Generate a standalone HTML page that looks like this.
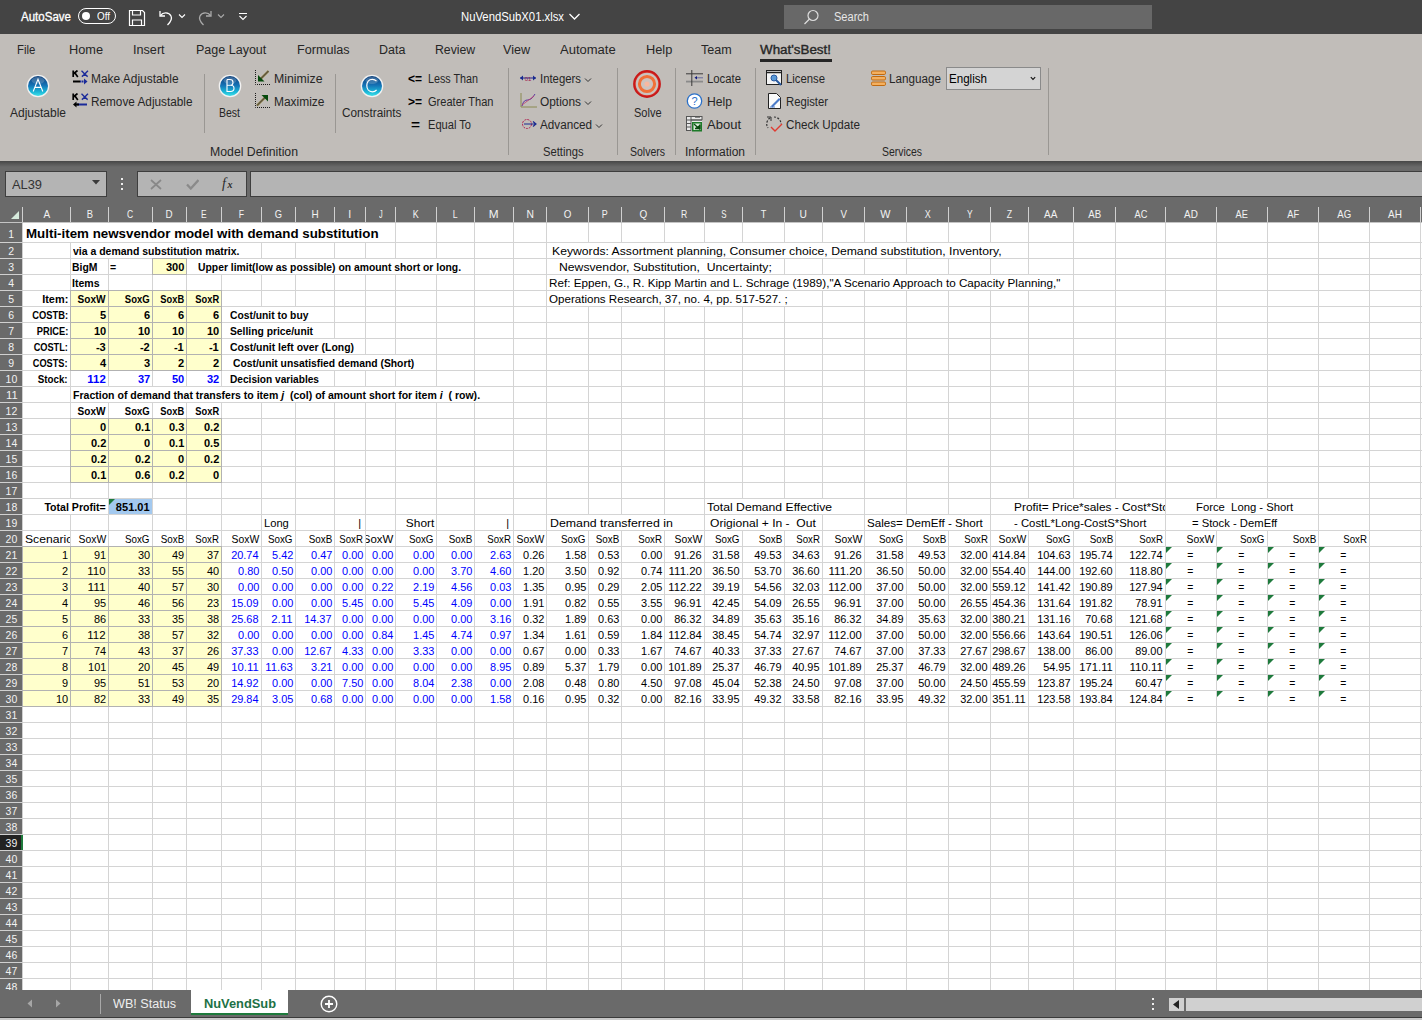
<!DOCTYPE html>
<html><head><meta charset="utf-8"><style>
html,body{margin:0;padding:0;}
body{width:1422px;height:1020px;overflow:hidden;position:relative;background:#fff;font-family:"Liberation Sans",sans-serif;}
body div, body svg{position:absolute;}
body div div, body div svg{position:absolute;}
</style></head><body>
<div style="left:0px;top:0px;width:1422px;height:34px;background:#444444;"></div>
<div style="left:21.00px;top:4.84px;width:56.03px;height:24px;line-height:24px;font-size:12px;color:#fff;text-align:left;white-space:pre;transform:scaleX(0.9609);transform-origin:left;-webkit-text-stroke:0.3px #fff;">AutoSave</div>
<div style="left:78px;top:8px;width:36px;height:14px;border:1px solid #fff;border-radius:8px;"></div>
<div style="left:82px;top:12px;width:8px;height:8px;background:#fff;border-radius:50%;"></div>
<div style="left:97.00px;top:7.04px;width:17.15px;height:20px;line-height:20px;font-size:10px;color:#fff;text-align:left;white-space:pre;transform:scaleX(0.9884);transform-origin:left;">Off</div>
<svg style="left:128px;top:9px" width="18" height="18" viewBox="0 0 18 18"><path d="M1.5 1.5h13l2 2v13h-15z" fill="none" stroke="#fff" stroke-width="1.2"/><path d="M4.5 1.5v4.5h8v-4.5M4.5 16.5v-5.5h9v5.5" fill="none" stroke="#fff" stroke-width="1.2"/></svg>
<svg style="left:157px;top:9px" width="18" height="18" viewBox="0 0 18 18"><path d="M3 2v5h5" fill="none" stroke="#fff" stroke-width="1.3"/><path d="M3.5 6.5C6 3 12 3 14 7c1.5 3-0.5 6-3.5 9" fill="none" stroke="#fff" stroke-width="1.3"/></svg>
<svg style="left:178px;top:13px" width="8" height="6" viewBox="0 0 8 6"><path d="M1 1.5l3 3 3-3" fill="none" stroke="#fff" stroke-width="1.1"/></svg>
<svg style="left:196px;top:9px" width="18" height="18" viewBox="0 0 18 18"><path d="M15 2v5h-5" fill="none" stroke="#aaa" stroke-width="1.3"/><path d="M14.5 6.5C12 3 6 3 4 7c-1.5 3 0.5 6 3.5 9" fill="none" stroke="#aaa" stroke-width="1.3"/></svg>
<svg style="left:217px;top:13px" width="8" height="6" viewBox="0 0 8 6"><path d="M1 1.5l3 3 3-3" fill="none" stroke="#aaa" stroke-width="1.1"/></svg>
<svg style="left:238px;top:11px" width="10" height="10" viewBox="0 0 10 10"><path d="M1 2.5h8M1.5 5l3.5 3.5 3.5-3.5" fill="none" stroke="#fff" stroke-width="1.1"/></svg>
<div style="left:461.00px;top:5.34px;width:113.40px;height:24px;line-height:24px;font-size:12px;color:#fff;text-align:left;white-space:pre;transform:scaleX(0.9415);transform-origin:left;">NuVendSubX01.xlsx</div>
<svg style="left:568px;top:12px" width="13" height="9" viewBox="0 0 13 9"><path d="M1.5 2l5 5 5-5" fill="none" stroke="#fff" stroke-width="1.3"/></svg>
<div style="left:784px;top:5px;width:368px;height:24px;background:#686868;"></div>
<svg style="left:803px;top:9px" width="17" height="17" viewBox="0 0 17 17"><circle cx="10" cy="6.5" r="5" fill="none" stroke="#ddd" stroke-width="1.2"/><path d="M6.5 10L1.5 15" stroke="#ddd" stroke-width="1.3"/></svg>
<div style="left:834.00px;top:5.34px;width:42.02px;height:24px;line-height:24px;font-size:12px;color:#e6e6e6;text-align:left;white-space:pre;transform:scaleX(0.9206);transform-origin:left;">Search</div>
<div style="left:0px;top:34px;width:1422px;height:127px;background:#c1bdb9;"></div>
<div style="left:17.00px;top:37.84px;width:23.34px;height:24px;line-height:24px;font-size:12px;color:#262626;text-align:left;white-space:pre;transform:scaleX(0.9465);transform-origin:left;">File</div>
<div style="left:69.00px;top:37.84px;width:36.01px;height:24px;line-height:24px;font-size:12px;color:#262626;text-align:left;white-space:pre;transform:scaleX(1.0622);transform-origin:left;">Home</div>
<div style="left:133.00px;top:37.84px;width:34.01px;height:24px;line-height:24px;font-size:12px;color:#262626;text-align:left;white-space:pre;transform:scaleX(1.0530);transform-origin:left;">Insert</div>
<div style="left:196.00px;top:37.84px;width:71.38px;height:24px;line-height:24px;font-size:12px;color:#262626;text-align:left;white-space:pre;transform:scaleX(1.0433);transform-origin:left;">Page Layout</div>
<div style="left:297.00px;top:37.84px;width:54.01px;height:24px;line-height:24px;font-size:12px;color:#262626;text-align:left;white-space:pre;transform:scaleX(1.0519);transform-origin:left;">Formulas</div>
<div style="left:379.00px;top:37.84px;width:29.35px;height:24px;line-height:24px;font-size:12px;color:#262626;text-align:left;white-space:pre;transform:scaleX(1.0376);transform-origin:left;">Data</div>
<div style="left:435.00px;top:37.84px;width:43.34px;height:24px;line-height:24px;font-size:12px;color:#262626;text-align:left;white-space:pre;transform:scaleX(1.0217);transform-origin:left;">Review</div>
<div style="left:503.00px;top:37.84px;width:29.79px;height:24px;line-height:24px;font-size:12px;color:#262626;text-align:left;white-space:pre;transform:scaleX(1.0468);transform-origin:left;">View</div>
<div style="left:560.00px;top:37.84px;width:55.36px;height:24px;line-height:24px;font-size:12px;color:#262626;text-align:left;white-space:pre;transform:scaleX(1.0845);transform-origin:left;">Automate</div>
<div style="left:646.00px;top:37.84px;width:28.68px;height:24px;line-height:24px;font-size:12px;color:#262626;text-align:left;white-space:pre;transform:scaleX(1.0657);transform-origin:left;">Help</div>
<div style="left:701.00px;top:37.84px;width:33.34px;height:24px;line-height:24px;font-size:12px;color:#262626;text-align:left;white-space:pre;transform:scaleX(1.0463);transform-origin:left;">Team</div>
<div style="left:760.00px;top:37.84px;width:67.64px;height:24px;line-height:24px;font-size:12px;color:#262626;text-align:left;white-space:pre;transform:scaleX(1.1156);transform-origin:left;-webkit-text-stroke:0.35px #262626;">What&#x27;sBest!</div>
<div style="left:760px;top:59px;width:72px;height:3px;background:#262626;"></div>
<svg style="left:26px;top:74px" width="24" height="24" viewBox="0 0 24 24"><defs><linearGradient id="gA" x1="0" y1="0" x2="0" y2="1"><stop offset="0" stop-color="#0d3f7a"/><stop offset="0.45" stop-color="#1470b4"/><stop offset="0.8" stop-color="#1cb8d8"/><stop offset="1" stop-color="#40e0e8"/></linearGradient></defs><circle cx="12" cy="12" r="11.3" fill="#f2f2f2"/><circle cx="12" cy="12" r="10" fill="url(#gA)"/><ellipse cx="12" cy="6.5" rx="6.5" ry="3.5" fill="#fff" opacity="0.18"/><path d="M7.2 17.5L12 5.2 16.8 17.5M8.8 13.4h6.4" fill="none" stroke="#fff" stroke-width="1.1"/></svg>
<div style="left:10.00px;top:100.84px;width:60.04px;height:24px;line-height:24px;font-size:12px;color:#262626;text-align:left;white-space:pre;">Adjustable</div>
<svg style="left:218px;top:74px" width="24" height="24" viewBox="0 0 24 24"><defs><linearGradient id="gB" x1="0" y1="0" x2="0" y2="1"><stop offset="0" stop-color="#0d3f7a"/><stop offset="0.45" stop-color="#1470b4"/><stop offset="0.8" stop-color="#1cb8d8"/><stop offset="1" stop-color="#40e0e8"/></linearGradient></defs><circle cx="12" cy="12" r="11.3" fill="#f2f2f2"/><circle cx="12" cy="12" r="10" fill="url(#gB)"/><ellipse cx="12" cy="6.5" rx="6.5" ry="3.5" fill="#fff" opacity="0.18"/><path d="M9 5.5v12h3.6c2.2 0 3.4-1.3 3.4-3.2 0-1.8-1.3-3-3.2-3H9M9 11.3h3.2c1.8 0 2.8-1 2.8-2.9 0-1.8-1.1-2.9-3-2.9H9" fill="none" stroke="#fff" stroke-width="1.1"/></svg>
<div style="left:219.00px;top:100.84px;width:28.01px;height:24px;line-height:24px;font-size:12px;color:#262626;text-align:left;white-space:pre;transform:scaleX(0.8746);transform-origin:left;">Best</div>
<svg style="left:360px;top:74px" width="24" height="24" viewBox="0 0 24 24"><defs><linearGradient id="gC" x1="0" y1="0" x2="0" y2="1"><stop offset="0" stop-color="#0d3f7a"/><stop offset="0.45" stop-color="#1470b4"/><stop offset="0.8" stop-color="#1cb8d8"/><stop offset="1" stop-color="#40e0e8"/></linearGradient></defs><circle cx="12" cy="12" r="11.3" fill="#f2f2f2"/><circle cx="12" cy="12" r="10" fill="url(#gC)"/><ellipse cx="12" cy="6.5" rx="6.5" ry="3.5" fill="#fff" opacity="0.18"/><path d="M16.5 7.2C15.5 6 14 5.3 12.3 5.3 8.8 5.3 6.8 8.2 6.8 11.6s2 6.2 5.5 6.2c1.8 0 3.3-.7 4.3-2" fill="none" stroke="#fff" stroke-width="1.2"/></svg>
<div style="left:342.00px;top:100.84px;width:64.69px;height:24px;line-height:24px;font-size:12px;color:#262626;text-align:left;white-space:pre;transform:scaleX(0.9804);transform-origin:left;">Constraints</div>
<svg style="left:72px;top:70px" width="17" height="16" viewBox="0 0 17 16"><path d="M1.2 0.5v6.5M1.2 4L5.5 0.5M2.8 2.8L5.8 7" fill="none" stroke="#000" stroke-width="1.7"/><path d="M9.5 0.8c1.2 1 2.5 2.5 3.2 3.2s2 2 3 2.6M16 0.8c-1.2 1-2.5 2.5-3.2 3.2s-2 2-3 2.6" fill="none" stroke="#1a2a9a" stroke-width="1.4"/><path d="M1 11.5h7" stroke="#000" stroke-width="2"/><path d="M8 11.5h6" stroke="#1a2a9a" stroke-width="2" stroke-dasharray="1.5 0.5"/><path d="M12 8.5l3.5 3-3.5 3z" fill="#1a2a9a"/></svg>
<div style="left:91.00px;top:66.84px;width:92.05px;height:24px;line-height:24px;font-size:12px;color:#262626;text-align:left;white-space:pre;transform:scaleX(0.9938);transform-origin:left;">Make Adjustable</div>
<svg style="left:72px;top:93px" width="17" height="16" viewBox="0 0 17 16"><path d="M1.2 0.5v6.5M1.2 4L5.5 0.5M2.8 2.8L5.8 7" fill="none" stroke="#000" stroke-width="1.7"/><path d="M9.5 0.8c1.2 1 2.5 2.5 3.2 3.2s2 2 3 2.6M16 0.8c-1.2 1-2.5 2.5-3.2 3.2s-2 2-3 2.6" fill="none" stroke="#1a2a9a" stroke-width="1.4"/><path d="M5 11.5h10" stroke="#1a2a9a" stroke-width="2"/><path d="M3 11.5h4" stroke="#000" stroke-width="2"/><path d="M4.5 8.5L1 11.5l3.5 3z" fill="#000"/></svg>
<div style="left:91.00px;top:89.84px;width:107.39px;height:24px;line-height:24px;font-size:12px;color:#262626;text-align:left;white-space:pre;transform:scaleX(0.9817);transform-origin:left;">Remove Adjustable</div>
<div style="left:204px;top:74px;width:1px;height:59px;background:#9a9793;"></div>
<svg style="left:254px;top:70px" width="16" height="15" viewBox="0 0 16 15"><path d="M1.5 0v14.5h14.5" fill="none" stroke="#1a1a1a" stroke-width="1" stroke-dasharray="1 1"/><path d="M14.5 1L6 9.5" stroke="#7a6a18" stroke-width="2"/><path d="M14.5 1L6 9.5" stroke="#3a3aa0" stroke-width="0.6"/><path d="M4 5v6.5h6.5z" fill="#064a0c"/></svg>
<div style="left:273.50px;top:66.84px;width:51.34px;height:24px;line-height:24px;font-size:12px;color:#262626;text-align:left;white-space:pre;transform:scaleX(1.0246);transform-origin:left;">Minimize</div>
<svg style="left:254px;top:93px" width="16" height="15" viewBox="0 0 16 15"><path d="M1.5 0v14.5h14.5" fill="none" stroke="#1a1a1a" stroke-width="1" stroke-dasharray="1 1"/><path d="M3 12.5L11.5 4" stroke="#7a6a18" stroke-width="2"/><path d="M3 12.5L11.5 4" stroke="#3a3aa0" stroke-width="0.6"/><path d="M7.5 2h6.5v6.5z" fill="#064a0c"/></svg>
<div style="left:273.50px;top:89.84px;width:54.67px;height:24px;line-height:24px;font-size:12px;color:#262626;text-align:left;white-space:pre;transform:scaleX(0.9966);transform-origin:left;">Maximize</div>
<div style="left:335px;top:74px;width:1px;height:59px;background:#9a9793;"></div>
<div style="left:408.00px;top:66.84px;width:18.02px;height:24px;line-height:24px;font-size:12px;font-weight:bold;color:#000;text-align:left;white-space:pre;">&lt;=</div>
<div style="left:427.50px;top:66.84px;width:59.81px;height:24px;line-height:24px;font-size:12px;color:#262626;text-align:left;white-space:pre;transform:scaleX(0.8959);transform-origin:left;">Less Than</div>
<div style="left:408.00px;top:89.84px;width:18.02px;height:24px;line-height:24px;font-size:12px;font-weight:bold;color:#000;text-align:left;white-space:pre;">&gt;=</div>
<div style="left:427.50px;top:89.84px;width:75.14px;height:24px;line-height:24px;font-size:12px;color:#262626;text-align:left;white-space:pre;transform:scaleX(0.9207);transform-origin:left;">Greater Than</div>
<div style="left:411.00px;top:112.84px;width:11.01px;height:24px;line-height:24px;font-size:12px;font-weight:bold;color:#000;text-align:left;white-space:pre;transform:scaleX(1.2841);transform-origin:left;">=</div>
<div style="left:427.50px;top:112.84px;width:50.48px;height:24px;line-height:24px;font-size:12px;color:#262626;text-align:left;white-space:pre;transform:scaleX(0.9251);transform-origin:left;">Equal To</div>
<div style="left:210.00px;top:139.84px;width:90.04px;height:24px;line-height:24px;font-size:12px;color:#262626;text-align:left;white-space:pre;transform:scaleX(1.0228);transform-origin:left;">Model Definition</div>
<div style="left:508px;top:68px;width:1px;height:87px;background:#9a9793;"></div>
<svg style="left:519px;top:72px" width="18" height="12" viewBox="0 0 18 12"><path d="M1 6h16" stroke="#1a2a90" stroke-width="1"/><path d="M1 6l3-2.5v5zM17 6l-3-2.5v5z" fill="#1a2a90"/><text x="9" y="8.5" text-anchor="middle" font-family="Liberation Sans" font-size="6" fill="#a02050">01</text></svg>
<div style="left:539.50px;top:66.84px;width:47.36px;height:24px;line-height:24px;font-size:12px;color:#262626;text-align:left;white-space:pre;transform:scaleX(0.9457);transform-origin:left;">Integers</div>
<svg style="left:583px;top:77px" width="10" height="6" viewBox="0 0 10 6"><path d="M2 1.5l3 3 3-3" fill="none" stroke="#333" stroke-width="1"/></svg>
<svg style="left:520px;top:93px" width="17" height="15" viewBox="0 0 17 15"><path d="M1 0v14h16" fill="none" stroke="#8a8a50" stroke-width="1"/><path d="M2 13C5 2 9 12 15 1" fill="none" stroke="#5a3aa0" stroke-width="1"/><path d="M2 12L14 3" fill="none" stroke="#c04070" stroke-width="0.8"/></svg>
<div style="left:539.50px;top:89.84px;width:45.35px;height:24px;line-height:24px;font-size:12px;color:#262626;text-align:left;white-space:pre;transform:scaleX(0.9915);transform-origin:left;">Options</div>
<svg style="left:583px;top:100px" width="10" height="6" viewBox="0 0 10 6"><path d="M2 1.5l3 3 3-3" fill="none" stroke="#333" stroke-width="1"/></svg>
<svg style="left:521px;top:117px" width="16" height="14" viewBox="0 0 16 14"><circle cx="6" cy="7" r="4.5" fill="none" stroke="#b02050" stroke-width="1" stroke-dasharray="2 1"/><path d="M3 7h12M12 4.5l3 2.5-3 2.5" fill="none" stroke="#1a2a90" stroke-width="1.2"/></svg>
<div style="left:539.50px;top:112.84px;width:57.37px;height:24px;line-height:24px;font-size:12px;color:#262626;text-align:left;white-space:pre;transform:scaleX(0.9743);transform-origin:left;">Advanced</div>
<svg style="left:594px;top:123px" width="10" height="6" viewBox="0 0 10 6"><path d="M2 1.5l3 3 3-3" fill="none" stroke="#333" stroke-width="1"/></svg>
<div style="left:542.50px;top:139.84px;width:47.36px;height:24px;line-height:24px;font-size:12px;color:#262626;text-align:left;white-space:pre;transform:scaleX(0.9341);transform-origin:left;">Settings</div>
<div style="left:617px;top:68px;width:1px;height:87px;background:#9a9793;"></div>
<svg style="left:633px;top:70px" width="30" height="30" viewBox="0 0 30 30"><defs><radialGradient id="sr" cx="50%" cy="50%" r="50%"><stop offset="0.8" stop-color="#f04a3a"/><stop offset="1" stop-color="#c81818"/></radialGradient></defs><circle cx="14" cy="14" r="12.6" fill="none" stroke="url(#sr)" stroke-width="2.6"/><circle cx="14" cy="14" r="10.8" fill="#cdc3bf"/><circle cx="14" cy="14" r="7.6" fill="none" stroke="#f07038" stroke-width="3"/><circle cx="14" cy="14" r="2.6" fill="#f8b8a0"/></svg>
<div style="left:633.50px;top:100.84px;width:34.02px;height:24px;line-height:24px;font-size:12px;color:#262626;text-align:left;white-space:pre;transform:scaleX(0.9162);transform-origin:left;">Solve</div>
<div style="left:629.50px;top:139.84px;width:44.01px;height:24px;line-height:24px;font-size:12px;color:#262626;text-align:left;white-space:pre;transform:scaleX(0.8747);transform-origin:left;">Solvers</div>
<div style="left:675px;top:68px;width:1px;height:87px;background:#9a9793;"></div>
<svg style="left:686px;top:70px" width="17" height="16" viewBox="0 0 17 16"><path d="M0 3.8h17" stroke="#3a3a3a" stroke-width="1"/><path d="M0 11.6h17" stroke="#8a8a8a" stroke-width="1.8"/><path d="M5.8 0v16" stroke="#3a3a3a" stroke-width="1"/><path d="M8.5 7.8l2.5-1.8v3.6z" fill="#101a80"/><path d="M11.5 7.8h5" stroke="#101a80" stroke-width="1" stroke-dasharray="1 1"/></svg>
<div style="left:706.50px;top:66.84px;width:40.03px;height:24px;line-height:24px;font-size:12px;color:#262626;text-align:left;white-space:pre;transform:scaleX(0.9438);transform-origin:left;">Locate</div>
<svg style="left:686px;top:93px" width="17" height="16" viewBox="0 0 17 16"><circle cx="8.5" cy="8" r="7.2" fill="#fff" stroke="#2a70c8" stroke-width="1.3"/><text x="8.5" y="12.3" text-anchor="middle" font-family="Liberation Sans" font-size="11" fill="#2a70c8">?</text></svg>
<div style="left:706.50px;top:89.84px;width:28.68px;height:24px;line-height:24px;font-size:12px;color:#262626;text-align:left;white-space:pre;transform:scaleX(1.0130);transform-origin:left;">Help</div>
<svg style="left:686px;top:116px" width="17" height="16" viewBox="0 0 17 16"><rect x="0" y="0" width="16" height="15" fill="#e8e8e8"/><path d="M0.5 0v15M5 0v15M16 0v4M0 0.5h16M0 4h16M0 7.5h5M0 11h5M0 14.5h5M5 4h11" stroke="#555" stroke-width="1"/><path d="M9 1.5h5" stroke="#888"/><rect x="6" y="6" width="10" height="9.5" fill="#1c7a28"/><rect x="7.5" y="7.5" width="7" height="6.5" fill="#d8e8d8"/><path d="M8 8l6 5.5M9 12.5h5v-4" fill="#0a4a10" stroke="#0a4a10" stroke-width="1.3"/></svg>
<div style="left:706.50px;top:112.84px;width:35.36px;height:24px;line-height:24px;font-size:12px;color:#262626;text-align:left;white-space:pre;transform:scaleX(1.0843);transform-origin:left;">About</div>
<div style="left:685.00px;top:139.84px;width:64.02px;height:24px;line-height:24px;font-size:12px;color:#262626;text-align:left;white-space:pre;">Information</div>
<div style="left:755px;top:68px;width:1px;height:87px;background:#9a9793;"></div>
<svg style="left:766px;top:70px" width="17" height="16" viewBox="0 0 17 16"><rect x="0.5" y="0.5" width="15" height="14" fill="#f4f4f4" stroke="#222" stroke-width="1"/><path d="M0.5 2.5h15" stroke="#222" stroke-width="1.5"/><circle cx="8" cy="8" r="3" fill="#5a9ad8" stroke="#2a5aa0"/><path d="M10 10l5 5" stroke="#2a5aa0" stroke-width="2"/></svg>
<div style="left:786.00px;top:66.84px;width:45.36px;height:24px;line-height:24px;font-size:12px;color:#262626;text-align:left;white-space:pre;transform:scaleX(0.9430);transform-origin:left;">License</div>
<svg style="left:767px;top:93px" width="16" height="16" viewBox="0 0 16 16"><path d="M1.5 0.5h8l4 4v11h-12z" fill="#fafafa" stroke="#222"/><path d="M4 13l8-8 1.5 1.5-8 8z" fill="#4a7ac8"/><path d="M3 14h5" stroke="#4a7ac8"/></svg>
<div style="left:786.00px;top:89.84px;width:48.68px;height:24px;line-height:24px;font-size:12px;color:#262626;text-align:left;white-space:pre;transform:scaleX(0.9400);transform-origin:left;">Register</div>
<svg style="left:766px;top:116px" width="17" height="16" viewBox="0 0 17 16"><path d="M4 2A7 7 0 0 0 2 12M8 1a7 7 0 0 1 7 7" fill="none" stroke="#333" stroke-width="1.2" stroke-dasharray="2 1.5"/><path d="M1 1h4v4" fill="none" stroke="#333" stroke-width="1"/><path d="M5 11l4 4 7-7" fill="none" stroke="#e03a30" stroke-width="1.4"/></svg>
<div style="left:786.00px;top:112.84px;width:80.04px;height:24px;line-height:24px;font-size:12px;color:#262626;text-align:left;white-space:pre;transform:scaleX(0.9732);transform-origin:left;">Check Update</div>
<svg style="left:870px;top:70px" width="17" height="17" viewBox="0 0 17 17"><g fill="#f4b060" stroke="#c06a10" stroke-width="1"><rect x="1.5" y="1" width="14" height="3.5" rx="1.2"/><rect x="1.5" y="6.5" width="14" height="3.5" rx="1.2"/><rect x="1.5" y="12" width="14" height="3.5" rx="1.2"/></g></svg>
<div style="left:889.00px;top:66.84px;width:57.38px;height:24px;line-height:24px;font-size:12px;color:#262626;text-align:left;white-space:pre;transform:scaleX(0.9741);transform-origin:left;">Language</div>
<div style="left:946px;top:67px;width:93px;height:21px;background:#d4d4d4;border:1px solid #8a8a8a;"></div>
<div style="left:949.00px;top:66.84px;width:43.36px;height:24px;line-height:24px;font-size:12px;color:#000;text-align:left;white-space:pre;transform:scaleX(0.9655);transform-origin:left;">English</div>
<svg style="left:1030px;top:76px" width="6" height="5" viewBox="0 0 6 5"><path d="M0.8 1.2l2.2 2.2 2.2-2.2" fill="none" stroke="#111" stroke-width="1.1"/></svg>
<div style="left:882.00px;top:139.84px;width:50.01px;height:24px;line-height:24px;font-size:12px;color:#262626;text-align:left;white-space:pre;transform:scaleX(0.8693);transform-origin:left;">Services</div>
<div style="left:1048px;top:68px;width:1px;height:87px;background:#9a9793;"></div>
<div style="left:0px;top:161px;width:1422px;height:62px;background:#6a6a6a;"></div>
<div style="left:0px;top:161px;width:1422px;height:6px;background:linear-gradient(#474747,#6a6a6a);"></div>
<div style="left:5px;top:171px;width:100px;height:24px;background:#b4b4b4;border:1px solid #3e3e3e;"></div>
<div style="left:12.00px;top:172.84px;width:32.02px;height:24px;line-height:24px;font-size:12px;color:#333;text-align:left;white-space:pre;transform:scaleX(1.0705);transform-origin:left;">AL39</div>
<svg style="left:92px;top:180px" width="8" height="5" viewBox="0 0 8 5"><path d="M0 0h8l-4 4.5z" fill="#3a3a3a"/></svg>
<div style="left:121px;top:178px;width:2px;height:2px;background:#eee;"></div>
<div style="left:121px;top:183px;width:2px;height:2px;background:#eee;"></div>
<div style="left:121px;top:188px;width:2px;height:2px;background:#eee;"></div>
<div style="left:137px;top:171px;width:108px;height:24px;background:#b4b4b4;border:1px solid #3e3e3e;"></div>
<svg style="left:150px;top:179px" width="12" height="11" viewBox="0 0 12 11"><path d="M1 1l10 9M11 1L1 10" stroke="#888" stroke-width="1.7"/></svg>
<svg style="left:186px;top:179px" width="13" height="11" viewBox="0 0 13 11"><path d="M1 5.5l3.8 4L12.5 1" fill="none" stroke="#8a8a8a" stroke-width="2.3"/></svg>
<svg style="left:220px;top:176px" width="16" height="16" viewBox="0 0 16 16"><text x="2" y="12" font-family="Liberation Serif" font-style="italic" font-size="14" fill="#2a2a2a">f</text><text x="7.5" y="12" font-family="Liberation Serif" font-style="italic" font-weight="bold" font-size="10" fill="#2a2a2a">x</text></svg>
<div style="left:250px;top:171px;width:1180px;height:24px;background:#b4b4b4;border:1px solid #3e3e3e;"></div>
<svg style="left:11px;top:211px" width="8" height="8" viewBox="0 0 8 8"><path d="M8 0v8H0z" fill="#d6eadc"/></svg>
<div style="left:40.66px;top:203.02px;width:11.67px;height:23.0px;line-height:23.0px;font-size:11.5px;color:#f2f2f2;text-align:center;white-space:pre;transform:scaleX(0.8674);transform-origin:center;">A</div>
<div style="left:83.66px;top:203.02px;width:11.67px;height:23.0px;line-height:23.0px;font-size:11.5px;color:#f2f2f2;text-align:center;white-space:pre;transform:scaleX(0.8155);transform-origin:center;">B</div>
<div style="left:124.35px;top:203.02px;width:12.31px;height:23.0px;line-height:23.0px;font-size:11.5px;color:#f2f2f2;text-align:center;white-space:pre;transform:scaleX(0.7383);transform-origin:center;">C</div>
<div style="left:163.35px;top:203.02px;width:12.31px;height:23.0px;line-height:23.0px;font-size:11.5px;color:#f2f2f2;text-align:center;white-space:pre;transform:scaleX(0.8519);transform-origin:center;">D</div>
<div style="left:198.16px;top:203.02px;width:11.67px;height:23.0px;line-height:23.0px;font-size:11.5px;color:#f2f2f2;text-align:center;white-space:pre;transform:scaleX(0.7320);transform-origin:center;">E</div>
<div style="left:235.99px;top:203.02px;width:11.02px;height:23.0px;line-height:23.0px;font-size:11.5px;color:#f2f2f2;text-align:center;white-space:pre;transform:scaleX(0.7523);transform-origin:center;">F</div>
<div style="left:272.03px;top:203.02px;width:12.94px;height:23.0px;line-height:23.0px;font-size:11.5px;color:#f2f2f2;text-align:center;white-space:pre;transform:scaleX(0.8111);transform-origin:center;">G</div>
<div style="left:308.85px;top:203.02px;width:12.31px;height:23.0px;line-height:23.0px;font-size:11.5px;color:#f2f2f2;text-align:center;white-space:pre;transform:scaleX(0.8627);transform-origin:center;">H</div>
<div style="left:346.40px;top:203.02px;width:7.19px;height:23.0px;line-height:23.0px;font-size:11.5px;color:#f2f2f2;text-align:center;white-space:pre;transform:scaleX(0.9069);transform-origin:center;">I</div>
<div style="left:375.62px;top:203.02px;width:9.75px;height:23.0px;line-height:23.0px;font-size:11.5px;color:#f2f2f2;text-align:center;white-space:pre;transform:scaleX(0.6377);transform-origin:center;">J</div>
<div style="left:410.16px;top:203.02px;width:11.67px;height:23.0px;line-height:23.0px;font-size:11.5px;color:#f2f2f2;text-align:center;white-space:pre;transform:scaleX(0.7789);transform-origin:center;">K</div>
<div style="left:450.30px;top:203.02px;width:10.40px;height:23.0px;line-height:23.0px;font-size:11.5px;color:#f2f2f2;text-align:center;white-space:pre;transform:scaleX(0.7560);transform-origin:center;">L</div>
<div style="left:487.21px;top:203.02px;width:13.58px;height:23.0px;line-height:23.0px;font-size:11.5px;color:#f2f2f2;text-align:center;white-space:pre;transform:scaleX(1.0264);transform-origin:center;">M</div>
<div style="left:523.85px;top:203.02px;width:12.31px;height:23.0px;line-height:23.0px;font-size:11.5px;color:#f2f2f2;text-align:center;white-space:pre;transform:scaleX(0.8938);transform-origin:center;">N</div>
<div style="left:561.03px;top:203.02px;width:12.94px;height:23.0px;line-height:23.0px;font-size:11.5px;color:#f2f2f2;text-align:center;white-space:pre;transform:scaleX(0.8512);transform-origin:center;">O</div>
<div style="left:599.16px;top:203.02px;width:11.67px;height:23.0px;line-height:23.0px;font-size:11.5px;color:#f2f2f2;text-align:center;white-space:pre;transform:scaleX(0.7745);transform-origin:center;">P</div>
<div style="left:636.53px;top:203.02px;width:12.94px;height:23.0px;line-height:23.0px;font-size:11.5px;color:#f2f2f2;text-align:center;white-space:pre;transform:scaleX(0.8651);transform-origin:center;">Q</div>
<div style="left:678.35px;top:203.02px;width:12.31px;height:23.0px;line-height:23.0px;font-size:11.5px;color:#f2f2f2;text-align:center;white-space:pre;transform:scaleX(0.7518);transform-origin:center;">R</div>
<div style="left:717.66px;top:203.02px;width:11.67px;height:23.0px;line-height:23.0px;font-size:11.5px;color:#f2f2f2;text-align:center;white-space:pre;transform:scaleX(0.6888);transform-origin:center;">S</div>
<div style="left:757.99px;top:203.02px;width:11.02px;height:23.0px;line-height:23.0px;font-size:11.5px;color:#f2f2f2;text-align:center;white-space:pre;transform:scaleX(0.7978);transform-origin:center;">T</div>
<div style="left:797.35px;top:203.02px;width:12.31px;height:23.0px;line-height:23.0px;font-size:11.5px;color:#f2f2f2;text-align:center;white-space:pre;transform:scaleX(0.8884);transform-origin:center;">U</div>
<div style="left:837.66px;top:203.02px;width:11.67px;height:23.0px;line-height:23.0px;font-size:11.5px;color:#f2f2f2;text-align:center;white-space:pre;transform:scaleX(0.8506);transform-origin:center;">V</div>
<div style="left:878.07px;top:203.02px;width:14.85px;height:23.0px;line-height:23.0px;font-size:11.5px;color:#f2f2f2;text-align:center;white-space:pre;transform:scaleX(0.9425);transform-origin:center;">W</div>
<div style="left:921.66px;top:203.02px;width:11.67px;height:23.0px;line-height:23.0px;font-size:11.5px;color:#f2f2f2;text-align:center;white-space:pre;transform:scaleX(0.7781);transform-origin:center;">X</div>
<div style="left:963.66px;top:203.02px;width:11.67px;height:23.0px;line-height:23.0px;font-size:11.5px;color:#f2f2f2;text-align:center;white-space:pre;transform:scaleX(0.7306);transform-origin:center;">Y</div>
<div style="left:1003.99px;top:203.02px;width:11.02px;height:23.0px;line-height:23.0px;font-size:11.5px;color:#f2f2f2;text-align:center;white-space:pre;transform:scaleX(0.7667);transform-origin:center;">Z</div>
<div style="left:1041.33px;top:203.02px;width:19.34px;height:23.0px;line-height:23.0px;font-size:11.5px;color:#f2f2f2;text-align:center;white-space:pre;transform:scaleX(0.8674);transform-origin:center;">AA</div>
<div style="left:1084.83px;top:203.02px;width:19.34px;height:23.0px;line-height:23.0px;font-size:11.5px;color:#f2f2f2;text-align:center;white-space:pre;transform:scaleX(0.8415);transform-origin:center;">AB</div>
<div style="left:1130.51px;top:203.02px;width:19.98px;height:23.0px;line-height:23.0px;font-size:11.5px;color:#f2f2f2;text-align:center;white-space:pre;transform:scaleX(0.8003);transform-origin:center;">AC</div>
<div style="left:1181.01px;top:203.02px;width:19.98px;height:23.0px;line-height:23.0px;font-size:11.5px;color:#f2f2f2;text-align:center;white-space:pre;transform:scaleX(0.8594);transform-origin:center;">AD</div>
<div style="left:1232.33px;top:203.02px;width:19.34px;height:23.0px;line-height:23.0px;font-size:11.5px;color:#f2f2f2;text-align:center;white-space:pre;transform:scaleX(0.7997);transform-origin:center;">AE</div>
<div style="left:1283.65px;top:203.02px;width:18.69px;height:23.0px;line-height:23.0px;font-size:11.5px;color:#f2f2f2;text-align:center;white-space:pre;transform:scaleX(0.8124);transform-origin:center;">AF</div>
<div style="left:1333.69px;top:203.02px;width:20.62px;height:23.0px;line-height:23.0px;font-size:11.5px;color:#f2f2f2;text-align:center;white-space:pre;transform:scaleX(0.8371);transform-origin:center;">AG</div>
<div style="left:1385.01px;top:203.02px;width:19.98px;height:23.0px;line-height:23.0px;font-size:11.5px;color:#f2f2f2;text-align:center;white-space:pre;transform:scaleX(0.8650);transform-origin:center;">AH</div>
<div style="left:22px;top:207px;width:1px;height:15px;background:#d0d0d0;"></div>
<div style="left:70px;top:207px;width:1px;height:15px;background:#d0d0d0;"></div>
<div style="left:108px;top:207px;width:1px;height:15px;background:#d0d0d0;"></div>
<div style="left:152px;top:207px;width:1px;height:15px;background:#d0d0d0;"></div>
<div style="left:186px;top:207px;width:1px;height:15px;background:#d0d0d0;"></div>
<div style="left:221px;top:207px;width:1px;height:15px;background:#d0d0d0;"></div>
<div style="left:261px;top:207px;width:1px;height:15px;background:#d0d0d0;"></div>
<div style="left:295px;top:207px;width:1px;height:15px;background:#d0d0d0;"></div>
<div style="left:334px;top:207px;width:1px;height:15px;background:#d0d0d0;"></div>
<div style="left:365px;top:207px;width:1px;height:15px;background:#d0d0d0;"></div>
<div style="left:395px;top:207px;width:1px;height:15px;background:#d0d0d0;"></div>
<div style="left:436px;top:207px;width:1px;height:15px;background:#d0d0d0;"></div>
<div style="left:474px;top:207px;width:1px;height:15px;background:#d0d0d0;"></div>
<div style="left:513px;top:207px;width:1px;height:15px;background:#d0d0d0;"></div>
<div style="left:546px;top:207px;width:1px;height:15px;background:#d0d0d0;"></div>
<div style="left:588px;top:207px;width:1px;height:15px;background:#d0d0d0;"></div>
<div style="left:621px;top:207px;width:1px;height:15px;background:#d0d0d0;"></div>
<div style="left:664px;top:207px;width:1px;height:15px;background:#d0d0d0;"></div>
<div style="left:704px;top:207px;width:1px;height:15px;background:#d0d0d0;"></div>
<div style="left:742px;top:207px;width:1px;height:15px;background:#d0d0d0;"></div>
<div style="left:784px;top:207px;width:1px;height:15px;background:#d0d0d0;"></div>
<div style="left:822px;top:207px;width:1px;height:15px;background:#d0d0d0;"></div>
<div style="left:864px;top:207px;width:1px;height:15px;background:#d0d0d0;"></div>
<div style="left:906px;top:207px;width:1px;height:15px;background:#d0d0d0;"></div>
<div style="left:948px;top:207px;width:1px;height:15px;background:#d0d0d0;"></div>
<div style="left:990px;top:207px;width:1px;height:15px;background:#d0d0d0;"></div>
<div style="left:1028px;top:207px;width:1px;height:15px;background:#d0d0d0;"></div>
<div style="left:1073px;top:207px;width:1px;height:15px;background:#d0d0d0;"></div>
<div style="left:1115px;top:207px;width:1px;height:15px;background:#d0d0d0;"></div>
<div style="left:1165px;top:207px;width:1px;height:15px;background:#d0d0d0;"></div>
<div style="left:1216px;top:207px;width:1px;height:15px;background:#d0d0d0;"></div>
<div style="left:1267px;top:207px;width:1px;height:15px;background:#d0d0d0;"></div>
<div style="left:1318px;top:207px;width:1px;height:15px;background:#d0d0d0;"></div>
<div style="left:1369px;top:207px;width:1px;height:15px;background:#d0d0d0;"></div>
<div style="left:1420px;top:207px;width:1px;height:15px;background:#d0d0d0;"></div>
<div style="left:23px;top:223px;width:1399px;height:767px;background:#fff;"></div>
<div style="left:0px;top:223px;width:22px;height:767px;background:#6a6a6a;"></div>
<div style="left:22px;top:223px;width:1px;height:767px;background:#d0d0d0;"></div>
<div style="left:0px;top:222px;width:1422px;height:1px;background:#c4c4c4;"></div>
<div style="left:23px;top:242px;width:1399px;height:1px;background:#d4d4d4;"></div>
<div style="left:0px;top:242px;width:22px;height:1px;background:#d0d0d0;"></div>
<div style="left:23px;top:258px;width:1399px;height:1px;background:#d4d4d4;"></div>
<div style="left:0px;top:258px;width:22px;height:1px;background:#d0d0d0;"></div>
<div style="left:23px;top:274px;width:1399px;height:1px;background:#d4d4d4;"></div>
<div style="left:0px;top:274px;width:22px;height:1px;background:#d0d0d0;"></div>
<div style="left:23px;top:290px;width:1399px;height:1px;background:#d4d4d4;"></div>
<div style="left:0px;top:290px;width:22px;height:1px;background:#d0d0d0;"></div>
<div style="left:23px;top:306px;width:1399px;height:1px;background:#d4d4d4;"></div>
<div style="left:0px;top:306px;width:22px;height:1px;background:#d0d0d0;"></div>
<div style="left:23px;top:322px;width:1399px;height:1px;background:#d4d4d4;"></div>
<div style="left:0px;top:322px;width:22px;height:1px;background:#d0d0d0;"></div>
<div style="left:23px;top:338px;width:1399px;height:1px;background:#d4d4d4;"></div>
<div style="left:0px;top:338px;width:22px;height:1px;background:#d0d0d0;"></div>
<div style="left:23px;top:354px;width:1399px;height:1px;background:#d4d4d4;"></div>
<div style="left:0px;top:354px;width:22px;height:1px;background:#d0d0d0;"></div>
<div style="left:23px;top:370px;width:1399px;height:1px;background:#d4d4d4;"></div>
<div style="left:0px;top:370px;width:22px;height:1px;background:#d0d0d0;"></div>
<div style="left:23px;top:386px;width:1399px;height:1px;background:#d4d4d4;"></div>
<div style="left:0px;top:386px;width:22px;height:1px;background:#d0d0d0;"></div>
<div style="left:23px;top:402px;width:1399px;height:1px;background:#d4d4d4;"></div>
<div style="left:0px;top:402px;width:22px;height:1px;background:#d0d0d0;"></div>
<div style="left:23px;top:418px;width:1399px;height:1px;background:#d4d4d4;"></div>
<div style="left:0px;top:418px;width:22px;height:1px;background:#d0d0d0;"></div>
<div style="left:23px;top:434px;width:1399px;height:1px;background:#d4d4d4;"></div>
<div style="left:0px;top:434px;width:22px;height:1px;background:#d0d0d0;"></div>
<div style="left:23px;top:450px;width:1399px;height:1px;background:#d4d4d4;"></div>
<div style="left:0px;top:450px;width:22px;height:1px;background:#d0d0d0;"></div>
<div style="left:23px;top:466px;width:1399px;height:1px;background:#d4d4d4;"></div>
<div style="left:0px;top:466px;width:22px;height:1px;background:#d0d0d0;"></div>
<div style="left:23px;top:482px;width:1399px;height:1px;background:#d4d4d4;"></div>
<div style="left:0px;top:482px;width:22px;height:1px;background:#d0d0d0;"></div>
<div style="left:23px;top:498px;width:1399px;height:1px;background:#d4d4d4;"></div>
<div style="left:0px;top:498px;width:22px;height:1px;background:#d0d0d0;"></div>
<div style="left:23px;top:514px;width:1399px;height:1px;background:#d4d4d4;"></div>
<div style="left:0px;top:514px;width:22px;height:1px;background:#d0d0d0;"></div>
<div style="left:23px;top:530px;width:1399px;height:1px;background:#d4d4d4;"></div>
<div style="left:0px;top:530px;width:22px;height:1px;background:#d0d0d0;"></div>
<div style="left:23px;top:546px;width:1399px;height:1px;background:#d4d4d4;"></div>
<div style="left:0px;top:546px;width:22px;height:1px;background:#d0d0d0;"></div>
<div style="left:23px;top:562px;width:1399px;height:1px;background:#d4d4d4;"></div>
<div style="left:0px;top:562px;width:22px;height:1px;background:#d0d0d0;"></div>
<div style="left:23px;top:578px;width:1399px;height:1px;background:#d4d4d4;"></div>
<div style="left:0px;top:578px;width:22px;height:1px;background:#d0d0d0;"></div>
<div style="left:23px;top:594px;width:1399px;height:1px;background:#d4d4d4;"></div>
<div style="left:0px;top:594px;width:22px;height:1px;background:#d0d0d0;"></div>
<div style="left:23px;top:610px;width:1399px;height:1px;background:#d4d4d4;"></div>
<div style="left:0px;top:610px;width:22px;height:1px;background:#d0d0d0;"></div>
<div style="left:23px;top:626px;width:1399px;height:1px;background:#d4d4d4;"></div>
<div style="left:0px;top:626px;width:22px;height:1px;background:#d0d0d0;"></div>
<div style="left:23px;top:642px;width:1399px;height:1px;background:#d4d4d4;"></div>
<div style="left:0px;top:642px;width:22px;height:1px;background:#d0d0d0;"></div>
<div style="left:23px;top:658px;width:1399px;height:1px;background:#d4d4d4;"></div>
<div style="left:0px;top:658px;width:22px;height:1px;background:#d0d0d0;"></div>
<div style="left:23px;top:674px;width:1399px;height:1px;background:#d4d4d4;"></div>
<div style="left:0px;top:674px;width:22px;height:1px;background:#d0d0d0;"></div>
<div style="left:23px;top:690px;width:1399px;height:1px;background:#d4d4d4;"></div>
<div style="left:0px;top:690px;width:22px;height:1px;background:#d0d0d0;"></div>
<div style="left:23px;top:706px;width:1399px;height:1px;background:#d4d4d4;"></div>
<div style="left:0px;top:706px;width:22px;height:1px;background:#d0d0d0;"></div>
<div style="left:23px;top:722px;width:1399px;height:1px;background:#d4d4d4;"></div>
<div style="left:0px;top:722px;width:22px;height:1px;background:#d0d0d0;"></div>
<div style="left:23px;top:738px;width:1399px;height:1px;background:#d4d4d4;"></div>
<div style="left:0px;top:738px;width:22px;height:1px;background:#d0d0d0;"></div>
<div style="left:23px;top:754px;width:1399px;height:1px;background:#d4d4d4;"></div>
<div style="left:0px;top:754px;width:22px;height:1px;background:#d0d0d0;"></div>
<div style="left:23px;top:770px;width:1399px;height:1px;background:#d4d4d4;"></div>
<div style="left:0px;top:770px;width:22px;height:1px;background:#d0d0d0;"></div>
<div style="left:23px;top:786px;width:1399px;height:1px;background:#d4d4d4;"></div>
<div style="left:0px;top:786px;width:22px;height:1px;background:#d0d0d0;"></div>
<div style="left:23px;top:802px;width:1399px;height:1px;background:#d4d4d4;"></div>
<div style="left:0px;top:802px;width:22px;height:1px;background:#d0d0d0;"></div>
<div style="left:23px;top:818px;width:1399px;height:1px;background:#d4d4d4;"></div>
<div style="left:0px;top:818px;width:22px;height:1px;background:#d0d0d0;"></div>
<div style="left:23px;top:834px;width:1399px;height:1px;background:#d4d4d4;"></div>
<div style="left:0px;top:834px;width:22px;height:1px;background:#d0d0d0;"></div>
<div style="left:23px;top:850px;width:1399px;height:1px;background:#d4d4d4;"></div>
<div style="left:0px;top:850px;width:22px;height:1px;background:#d0d0d0;"></div>
<div style="left:23px;top:866px;width:1399px;height:1px;background:#d4d4d4;"></div>
<div style="left:0px;top:866px;width:22px;height:1px;background:#d0d0d0;"></div>
<div style="left:23px;top:882px;width:1399px;height:1px;background:#d4d4d4;"></div>
<div style="left:0px;top:882px;width:22px;height:1px;background:#d0d0d0;"></div>
<div style="left:23px;top:898px;width:1399px;height:1px;background:#d4d4d4;"></div>
<div style="left:0px;top:898px;width:22px;height:1px;background:#d0d0d0;"></div>
<div style="left:23px;top:914px;width:1399px;height:1px;background:#d4d4d4;"></div>
<div style="left:0px;top:914px;width:22px;height:1px;background:#d0d0d0;"></div>
<div style="left:23px;top:930px;width:1399px;height:1px;background:#d4d4d4;"></div>
<div style="left:0px;top:930px;width:22px;height:1px;background:#d0d0d0;"></div>
<div style="left:23px;top:946px;width:1399px;height:1px;background:#d4d4d4;"></div>
<div style="left:0px;top:946px;width:22px;height:1px;background:#d0d0d0;"></div>
<div style="left:23px;top:962px;width:1399px;height:1px;background:#d4d4d4;"></div>
<div style="left:0px;top:962px;width:22px;height:1px;background:#d0d0d0;"></div>
<div style="left:23px;top:978px;width:1399px;height:1px;background:#d4d4d4;"></div>
<div style="left:0px;top:978px;width:22px;height:1px;background:#d0d0d0;"></div>
<div style="left:0px;top:835px;width:21px;height:15px;background:#222;"></div>
<div style="left:21px;top:835px;width:2px;height:15px;background:#1e7a3c;"></div>
<div style="left:6.30px;top:222.52px;width:10.40px;height:23.0px;line-height:23.0px;font-size:11.5px;color:#f2f2f2;text-align:center;white-space:pre;transform:scaleX(0.9114);transform-origin:center;">1</div>
<div style="left:6.30px;top:239.52px;width:10.40px;height:23.0px;line-height:23.0px;font-size:11.5px;color:#f2f2f2;text-align:center;white-space:pre;transform:scaleX(0.9114);transform-origin:center;">2</div>
<div style="left:6.30px;top:255.52px;width:10.40px;height:23.0px;line-height:23.0px;font-size:11.5px;color:#f2f2f2;text-align:center;white-space:pre;transform:scaleX(0.9114);transform-origin:center;">3</div>
<div style="left:6.30px;top:271.52px;width:10.40px;height:23.0px;line-height:23.0px;font-size:11.5px;color:#f2f2f2;text-align:center;white-space:pre;transform:scaleX(0.9114);transform-origin:center;">4</div>
<div style="left:6.30px;top:287.52px;width:10.40px;height:23.0px;line-height:23.0px;font-size:11.5px;color:#f2f2f2;text-align:center;white-space:pre;transform:scaleX(0.9114);transform-origin:center;">5</div>
<div style="left:6.30px;top:303.52px;width:10.40px;height:23.0px;line-height:23.0px;font-size:11.5px;color:#f2f2f2;text-align:center;white-space:pre;transform:scaleX(0.9114);transform-origin:center;">6</div>
<div style="left:6.30px;top:319.52px;width:10.40px;height:23.0px;line-height:23.0px;font-size:11.5px;color:#f2f2f2;text-align:center;white-space:pre;transform:scaleX(0.9114);transform-origin:center;">7</div>
<div style="left:6.30px;top:335.52px;width:10.40px;height:23.0px;line-height:23.0px;font-size:11.5px;color:#f2f2f2;text-align:center;white-space:pre;transform:scaleX(0.9114);transform-origin:center;">8</div>
<div style="left:6.30px;top:351.52px;width:10.40px;height:23.0px;line-height:23.0px;font-size:11.5px;color:#f2f2f2;text-align:center;white-space:pre;transform:scaleX(0.9114);transform-origin:center;">9</div>
<div style="left:3.10px;top:367.52px;width:16.79px;height:23.0px;line-height:23.0px;font-size:11.5px;color:#f2f2f2;text-align:center;white-space:pre;transform:scaleX(0.9114);transform-origin:center;">10</div>
<div style="left:3.53px;top:383.52px;width:15.94px;height:23.0px;line-height:23.0px;font-size:11.5px;color:#f2f2f2;text-align:center;white-space:pre;transform:scaleX(0.9766);transform-origin:center;">11</div>
<div style="left:3.10px;top:399.52px;width:16.79px;height:23.0px;line-height:23.0px;font-size:11.5px;color:#f2f2f2;text-align:center;white-space:pre;transform:scaleX(0.9114);transform-origin:center;">12</div>
<div style="left:3.10px;top:415.52px;width:16.79px;height:23.0px;line-height:23.0px;font-size:11.5px;color:#f2f2f2;text-align:center;white-space:pre;transform:scaleX(0.9114);transform-origin:center;">13</div>
<div style="left:3.10px;top:431.52px;width:16.79px;height:23.0px;line-height:23.0px;font-size:11.5px;color:#f2f2f2;text-align:center;white-space:pre;transform:scaleX(0.9114);transform-origin:center;">14</div>
<div style="left:3.10px;top:447.52px;width:16.79px;height:23.0px;line-height:23.0px;font-size:11.5px;color:#f2f2f2;text-align:center;white-space:pre;transform:scaleX(0.9114);transform-origin:center;">15</div>
<div style="left:3.10px;top:463.52px;width:16.79px;height:23.0px;line-height:23.0px;font-size:11.5px;color:#f2f2f2;text-align:center;white-space:pre;transform:scaleX(0.9114);transform-origin:center;">16</div>
<div style="left:3.10px;top:479.52px;width:16.79px;height:23.0px;line-height:23.0px;font-size:11.5px;color:#f2f2f2;text-align:center;white-space:pre;transform:scaleX(0.9114);transform-origin:center;">17</div>
<div style="left:3.10px;top:495.52px;width:16.79px;height:23.0px;line-height:23.0px;font-size:11.5px;color:#f2f2f2;text-align:center;white-space:pre;transform:scaleX(0.9114);transform-origin:center;">18</div>
<div style="left:3.10px;top:511.52px;width:16.79px;height:23.0px;line-height:23.0px;font-size:11.5px;color:#f2f2f2;text-align:center;white-space:pre;transform:scaleX(0.9114);transform-origin:center;">19</div>
<div style="left:3.10px;top:527.52px;width:16.79px;height:23.0px;line-height:23.0px;font-size:11.5px;color:#f2f2f2;text-align:center;white-space:pre;transform:scaleX(0.9114);transform-origin:center;">20</div>
<div style="left:3.10px;top:543.52px;width:16.79px;height:23.0px;line-height:23.0px;font-size:11.5px;color:#f2f2f2;text-align:center;white-space:pre;transform:scaleX(0.9114);transform-origin:center;">21</div>
<div style="left:3.10px;top:559.52px;width:16.79px;height:23.0px;line-height:23.0px;font-size:11.5px;color:#f2f2f2;text-align:center;white-space:pre;transform:scaleX(0.9114);transform-origin:center;">22</div>
<div style="left:3.10px;top:575.52px;width:16.79px;height:23.0px;line-height:23.0px;font-size:11.5px;color:#f2f2f2;text-align:center;white-space:pre;transform:scaleX(0.9114);transform-origin:center;">23</div>
<div style="left:3.10px;top:591.52px;width:16.79px;height:23.0px;line-height:23.0px;font-size:11.5px;color:#f2f2f2;text-align:center;white-space:pre;transform:scaleX(0.9114);transform-origin:center;">24</div>
<div style="left:3.10px;top:607.52px;width:16.79px;height:23.0px;line-height:23.0px;font-size:11.5px;color:#f2f2f2;text-align:center;white-space:pre;transform:scaleX(0.9114);transform-origin:center;">25</div>
<div style="left:3.10px;top:623.52px;width:16.79px;height:23.0px;line-height:23.0px;font-size:11.5px;color:#f2f2f2;text-align:center;white-space:pre;transform:scaleX(0.9114);transform-origin:center;">26</div>
<div style="left:3.10px;top:639.52px;width:16.79px;height:23.0px;line-height:23.0px;font-size:11.5px;color:#f2f2f2;text-align:center;white-space:pre;transform:scaleX(0.9114);transform-origin:center;">27</div>
<div style="left:3.10px;top:655.52px;width:16.79px;height:23.0px;line-height:23.0px;font-size:11.5px;color:#f2f2f2;text-align:center;white-space:pre;transform:scaleX(0.9114);transform-origin:center;">28</div>
<div style="left:3.10px;top:671.52px;width:16.79px;height:23.0px;line-height:23.0px;font-size:11.5px;color:#f2f2f2;text-align:center;white-space:pre;transform:scaleX(0.9114);transform-origin:center;">29</div>
<div style="left:3.10px;top:687.52px;width:16.79px;height:23.0px;line-height:23.0px;font-size:11.5px;color:#f2f2f2;text-align:center;white-space:pre;transform:scaleX(0.9114);transform-origin:center;">30</div>
<div style="left:3.10px;top:703.52px;width:16.79px;height:23.0px;line-height:23.0px;font-size:11.5px;color:#f2f2f2;text-align:center;white-space:pre;transform:scaleX(0.9114);transform-origin:center;">31</div>
<div style="left:3.10px;top:719.52px;width:16.79px;height:23.0px;line-height:23.0px;font-size:11.5px;color:#f2f2f2;text-align:center;white-space:pre;transform:scaleX(0.9114);transform-origin:center;">32</div>
<div style="left:3.10px;top:735.52px;width:16.79px;height:23.0px;line-height:23.0px;font-size:11.5px;color:#f2f2f2;text-align:center;white-space:pre;transform:scaleX(0.9114);transform-origin:center;">33</div>
<div style="left:3.10px;top:751.52px;width:16.79px;height:23.0px;line-height:23.0px;font-size:11.5px;color:#f2f2f2;text-align:center;white-space:pre;transform:scaleX(0.9114);transform-origin:center;">34</div>
<div style="left:3.10px;top:767.52px;width:16.79px;height:23.0px;line-height:23.0px;font-size:11.5px;color:#f2f2f2;text-align:center;white-space:pre;transform:scaleX(0.9114);transform-origin:center;">35</div>
<div style="left:3.10px;top:783.52px;width:16.79px;height:23.0px;line-height:23.0px;font-size:11.5px;color:#f2f2f2;text-align:center;white-space:pre;transform:scaleX(0.9114);transform-origin:center;">36</div>
<div style="left:3.10px;top:799.52px;width:16.79px;height:23.0px;line-height:23.0px;font-size:11.5px;color:#f2f2f2;text-align:center;white-space:pre;transform:scaleX(0.9114);transform-origin:center;">37</div>
<div style="left:3.10px;top:815.52px;width:16.79px;height:23.0px;line-height:23.0px;font-size:11.5px;color:#f2f2f2;text-align:center;white-space:pre;transform:scaleX(0.9114);transform-origin:center;">38</div>
<div style="left:3.10px;top:831.52px;width:16.79px;height:23.0px;line-height:23.0px;font-size:11.5px;color:#f2f2f2;text-align:center;white-space:pre;transform:scaleX(0.9114);transform-origin:center;">39</div>
<div style="left:3.10px;top:847.52px;width:16.79px;height:23.0px;line-height:23.0px;font-size:11.5px;color:#f2f2f2;text-align:center;white-space:pre;transform:scaleX(0.9114);transform-origin:center;">40</div>
<div style="left:3.10px;top:863.52px;width:16.79px;height:23.0px;line-height:23.0px;font-size:11.5px;color:#f2f2f2;text-align:center;white-space:pre;transform:scaleX(0.9114);transform-origin:center;">41</div>
<div style="left:3.10px;top:879.52px;width:16.79px;height:23.0px;line-height:23.0px;font-size:11.5px;color:#f2f2f2;text-align:center;white-space:pre;transform:scaleX(0.9114);transform-origin:center;">42</div>
<div style="left:3.10px;top:895.52px;width:16.79px;height:23.0px;line-height:23.0px;font-size:11.5px;color:#f2f2f2;text-align:center;white-space:pre;transform:scaleX(0.9114);transform-origin:center;">43</div>
<div style="left:3.10px;top:911.52px;width:16.79px;height:23.0px;line-height:23.0px;font-size:11.5px;color:#f2f2f2;text-align:center;white-space:pre;transform:scaleX(0.9114);transform-origin:center;">44</div>
<div style="left:3.10px;top:927.52px;width:16.79px;height:23.0px;line-height:23.0px;font-size:11.5px;color:#f2f2f2;text-align:center;white-space:pre;transform:scaleX(0.9114);transform-origin:center;">45</div>
<div style="left:3.10px;top:943.52px;width:16.79px;height:23.0px;line-height:23.0px;font-size:11.5px;color:#f2f2f2;text-align:center;white-space:pre;transform:scaleX(0.9114);transform-origin:center;">46</div>
<div style="left:3.10px;top:959.52px;width:16.79px;height:23.0px;line-height:23.0px;font-size:11.5px;color:#f2f2f2;text-align:center;white-space:pre;transform:scaleX(0.9114);transform-origin:center;">47</div>
<div style="left:3.10px;top:975.52px;width:16.79px;height:23.0px;line-height:23.0px;font-size:11.5px;color:#f2f2f2;text-align:center;white-space:pre;transform:scaleX(0.9114);transform-origin:center;">48</div>
<div style="left:70px;top:223px;width:1px;height:767px;background:#d4d4d4;"></div>
<div style="left:108px;top:223px;width:1px;height:767px;background:#d4d4d4;"></div>
<div style="left:152px;top:223px;width:1px;height:767px;background:#d4d4d4;"></div>
<div style="left:186px;top:223px;width:1px;height:767px;background:#d4d4d4;"></div>
<div style="left:221px;top:223px;width:1px;height:767px;background:#d4d4d4;"></div>
<div style="left:261px;top:223px;width:1px;height:767px;background:#d4d4d4;"></div>
<div style="left:295px;top:223px;width:1px;height:767px;background:#d4d4d4;"></div>
<div style="left:334px;top:223px;width:1px;height:767px;background:#d4d4d4;"></div>
<div style="left:365px;top:223px;width:1px;height:767px;background:#d4d4d4;"></div>
<div style="left:395px;top:223px;width:1px;height:767px;background:#d4d4d4;"></div>
<div style="left:436px;top:223px;width:1px;height:767px;background:#d4d4d4;"></div>
<div style="left:474px;top:223px;width:1px;height:767px;background:#d4d4d4;"></div>
<div style="left:513px;top:223px;width:1px;height:767px;background:#d4d4d4;"></div>
<div style="left:546px;top:223px;width:1px;height:767px;background:#d4d4d4;"></div>
<div style="left:588px;top:223px;width:1px;height:767px;background:#d4d4d4;"></div>
<div style="left:621px;top:223px;width:1px;height:767px;background:#d4d4d4;"></div>
<div style="left:664px;top:223px;width:1px;height:767px;background:#d4d4d4;"></div>
<div style="left:704px;top:223px;width:1px;height:767px;background:#d4d4d4;"></div>
<div style="left:742px;top:223px;width:1px;height:767px;background:#d4d4d4;"></div>
<div style="left:784px;top:223px;width:1px;height:767px;background:#d4d4d4;"></div>
<div style="left:822px;top:223px;width:1px;height:767px;background:#d4d4d4;"></div>
<div style="left:864px;top:223px;width:1px;height:767px;background:#d4d4d4;"></div>
<div style="left:906px;top:223px;width:1px;height:767px;background:#d4d4d4;"></div>
<div style="left:948px;top:223px;width:1px;height:767px;background:#d4d4d4;"></div>
<div style="left:990px;top:223px;width:1px;height:767px;background:#d4d4d4;"></div>
<div style="left:1028px;top:223px;width:1px;height:767px;background:#d4d4d4;"></div>
<div style="left:1073px;top:223px;width:1px;height:767px;background:#d4d4d4;"></div>
<div style="left:1115px;top:223px;width:1px;height:767px;background:#d4d4d4;"></div>
<div style="left:1165px;top:223px;width:1px;height:767px;background:#d4d4d4;"></div>
<div style="left:1216px;top:223px;width:1px;height:767px;background:#d4d4d4;"></div>
<div style="left:1267px;top:223px;width:1px;height:767px;background:#d4d4d4;"></div>
<div style="left:1318px;top:223px;width:1px;height:767px;background:#d4d4d4;"></div>
<div style="left:1369px;top:223px;width:1px;height:767px;background:#d4d4d4;"></div>
<div style="left:1420px;top:223px;width:1px;height:767px;background:#d4d4d4;"></div>
<div style="left:153px;top:259px;width:33px;height:15px;background:#ffffcc;"></div>
<div style="left:71px;top:291px;width:37px;height:15px;background:#ffffcc;"></div>
<div style="left:109px;top:291px;width:43px;height:15px;background:#ffffcc;"></div>
<div style="left:153px;top:291px;width:33px;height:15px;background:#ffffcc;"></div>
<div style="left:187px;top:291px;width:34px;height:15px;background:#ffffcc;"></div>
<div style="left:71px;top:307px;width:37px;height:15px;background:#ffffcc;"></div>
<div style="left:109px;top:307px;width:43px;height:15px;background:#ffffcc;"></div>
<div style="left:153px;top:307px;width:33px;height:15px;background:#ffffcc;"></div>
<div style="left:187px;top:307px;width:34px;height:15px;background:#ffffcc;"></div>
<div style="left:71px;top:323px;width:37px;height:15px;background:#ffffcc;"></div>
<div style="left:109px;top:323px;width:43px;height:15px;background:#ffffcc;"></div>
<div style="left:153px;top:323px;width:33px;height:15px;background:#ffffcc;"></div>
<div style="left:187px;top:323px;width:34px;height:15px;background:#ffffcc;"></div>
<div style="left:71px;top:339px;width:37px;height:15px;background:#ffffcc;"></div>
<div style="left:109px;top:339px;width:43px;height:15px;background:#ffffcc;"></div>
<div style="left:153px;top:339px;width:33px;height:15px;background:#ffffcc;"></div>
<div style="left:187px;top:339px;width:34px;height:15px;background:#ffffcc;"></div>
<div style="left:71px;top:355px;width:37px;height:15px;background:#ffffcc;"></div>
<div style="left:109px;top:355px;width:43px;height:15px;background:#ffffcc;"></div>
<div style="left:153px;top:355px;width:33px;height:15px;background:#ffffcc;"></div>
<div style="left:187px;top:355px;width:34px;height:15px;background:#ffffcc;"></div>
<div style="left:71px;top:419px;width:37px;height:15px;background:#ffffcc;"></div>
<div style="left:109px;top:419px;width:43px;height:15px;background:#ffffcc;"></div>
<div style="left:153px;top:419px;width:33px;height:15px;background:#ffffcc;"></div>
<div style="left:187px;top:419px;width:34px;height:15px;background:#ffffcc;"></div>
<div style="left:71px;top:435px;width:37px;height:15px;background:#ffffcc;"></div>
<div style="left:109px;top:435px;width:43px;height:15px;background:#ffffcc;"></div>
<div style="left:153px;top:435px;width:33px;height:15px;background:#ffffcc;"></div>
<div style="left:187px;top:435px;width:34px;height:15px;background:#ffffcc;"></div>
<div style="left:71px;top:451px;width:37px;height:15px;background:#ffffcc;"></div>
<div style="left:109px;top:451px;width:43px;height:15px;background:#ffffcc;"></div>
<div style="left:153px;top:451px;width:33px;height:15px;background:#ffffcc;"></div>
<div style="left:187px;top:451px;width:34px;height:15px;background:#ffffcc;"></div>
<div style="left:71px;top:467px;width:37px;height:15px;background:#ffffcc;"></div>
<div style="left:109px;top:467px;width:43px;height:15px;background:#ffffcc;"></div>
<div style="left:153px;top:467px;width:33px;height:15px;background:#ffffcc;"></div>
<div style="left:187px;top:467px;width:34px;height:15px;background:#ffffcc;"></div>
<div style="left:23px;top:547px;width:47px;height:15px;background:#ffffcc;"></div>
<div style="left:71px;top:547px;width:37px;height:15px;background:#ffffcc;"></div>
<div style="left:109px;top:547px;width:43px;height:15px;background:#ffffcc;"></div>
<div style="left:153px;top:547px;width:33px;height:15px;background:#ffffcc;"></div>
<div style="left:187px;top:547px;width:34px;height:15px;background:#ffffcc;"></div>
<div style="left:23px;top:563px;width:47px;height:15px;background:#ffffcc;"></div>
<div style="left:71px;top:563px;width:37px;height:15px;background:#ffffcc;"></div>
<div style="left:109px;top:563px;width:43px;height:15px;background:#ffffcc;"></div>
<div style="left:153px;top:563px;width:33px;height:15px;background:#ffffcc;"></div>
<div style="left:187px;top:563px;width:34px;height:15px;background:#ffffcc;"></div>
<div style="left:23px;top:579px;width:47px;height:15px;background:#ffffcc;"></div>
<div style="left:71px;top:579px;width:37px;height:15px;background:#ffffcc;"></div>
<div style="left:109px;top:579px;width:43px;height:15px;background:#ffffcc;"></div>
<div style="left:153px;top:579px;width:33px;height:15px;background:#ffffcc;"></div>
<div style="left:187px;top:579px;width:34px;height:15px;background:#ffffcc;"></div>
<div style="left:23px;top:595px;width:47px;height:15px;background:#ffffcc;"></div>
<div style="left:71px;top:595px;width:37px;height:15px;background:#ffffcc;"></div>
<div style="left:109px;top:595px;width:43px;height:15px;background:#ffffcc;"></div>
<div style="left:153px;top:595px;width:33px;height:15px;background:#ffffcc;"></div>
<div style="left:187px;top:595px;width:34px;height:15px;background:#ffffcc;"></div>
<div style="left:23px;top:611px;width:47px;height:15px;background:#ffffcc;"></div>
<div style="left:71px;top:611px;width:37px;height:15px;background:#ffffcc;"></div>
<div style="left:109px;top:611px;width:43px;height:15px;background:#ffffcc;"></div>
<div style="left:153px;top:611px;width:33px;height:15px;background:#ffffcc;"></div>
<div style="left:187px;top:611px;width:34px;height:15px;background:#ffffcc;"></div>
<div style="left:23px;top:627px;width:47px;height:15px;background:#ffffcc;"></div>
<div style="left:71px;top:627px;width:37px;height:15px;background:#ffffcc;"></div>
<div style="left:109px;top:627px;width:43px;height:15px;background:#ffffcc;"></div>
<div style="left:153px;top:627px;width:33px;height:15px;background:#ffffcc;"></div>
<div style="left:187px;top:627px;width:34px;height:15px;background:#ffffcc;"></div>
<div style="left:23px;top:643px;width:47px;height:15px;background:#ffffcc;"></div>
<div style="left:71px;top:643px;width:37px;height:15px;background:#ffffcc;"></div>
<div style="left:109px;top:643px;width:43px;height:15px;background:#ffffcc;"></div>
<div style="left:153px;top:643px;width:33px;height:15px;background:#ffffcc;"></div>
<div style="left:187px;top:643px;width:34px;height:15px;background:#ffffcc;"></div>
<div style="left:23px;top:659px;width:47px;height:15px;background:#ffffcc;"></div>
<div style="left:71px;top:659px;width:37px;height:15px;background:#ffffcc;"></div>
<div style="left:109px;top:659px;width:43px;height:15px;background:#ffffcc;"></div>
<div style="left:153px;top:659px;width:33px;height:15px;background:#ffffcc;"></div>
<div style="left:187px;top:659px;width:34px;height:15px;background:#ffffcc;"></div>
<div style="left:23px;top:675px;width:47px;height:15px;background:#ffffcc;"></div>
<div style="left:71px;top:675px;width:37px;height:15px;background:#ffffcc;"></div>
<div style="left:109px;top:675px;width:43px;height:15px;background:#ffffcc;"></div>
<div style="left:153px;top:675px;width:33px;height:15px;background:#ffffcc;"></div>
<div style="left:187px;top:675px;width:34px;height:15px;background:#ffffcc;"></div>
<div style="left:23px;top:691px;width:47px;height:15px;background:#ffffcc;"></div>
<div style="left:71px;top:691px;width:37px;height:15px;background:#ffffcc;"></div>
<div style="left:109px;top:691px;width:43px;height:15px;background:#ffffcc;"></div>
<div style="left:153px;top:691px;width:33px;height:15px;background:#ffffcc;"></div>
<div style="left:187px;top:691px;width:34px;height:15px;background:#ffffcc;"></div>
<div style="left:109px;top:499px;width:43px;height:15px;background:#a3c9ef;"></div>
<div style="left:152px;top:258px;width:35px;height:1px;background:#b2b2b2;"></div>
<div style="left:152px;top:274px;width:35px;height:1px;background:#b2b2b2;"></div>
<div style="left:152px;top:258px;width:1px;height:17px;background:#b2b2b2;"></div>
<div style="left:186px;top:258px;width:1px;height:17px;background:#b2b2b2;"></div>
<div style="left:70px;top:290px;width:152px;height:1px;background:#b2b2b2;"></div>
<div style="left:70px;top:306px;width:152px;height:1px;background:#b2b2b2;"></div>
<div style="left:70px;top:322px;width:152px;height:1px;background:#b2b2b2;"></div>
<div style="left:70px;top:338px;width:152px;height:1px;background:#b2b2b2;"></div>
<div style="left:70px;top:354px;width:152px;height:1px;background:#b2b2b2;"></div>
<div style="left:70px;top:370px;width:152px;height:1px;background:#b2b2b2;"></div>
<div style="left:70px;top:290px;width:1px;height:81px;background:#b2b2b2;"></div>
<div style="left:108px;top:290px;width:1px;height:81px;background:#b2b2b2;"></div>
<div style="left:152px;top:290px;width:1px;height:81px;background:#b2b2b2;"></div>
<div style="left:186px;top:290px;width:1px;height:81px;background:#b2b2b2;"></div>
<div style="left:221px;top:290px;width:1px;height:81px;background:#b2b2b2;"></div>
<div style="left:70px;top:418px;width:152px;height:1px;background:#b2b2b2;"></div>
<div style="left:70px;top:434px;width:152px;height:1px;background:#b2b2b2;"></div>
<div style="left:70px;top:450px;width:152px;height:1px;background:#b2b2b2;"></div>
<div style="left:70px;top:466px;width:152px;height:1px;background:#b2b2b2;"></div>
<div style="left:70px;top:482px;width:152px;height:1px;background:#b2b2b2;"></div>
<div style="left:70px;top:418px;width:1px;height:65px;background:#b2b2b2;"></div>
<div style="left:108px;top:418px;width:1px;height:65px;background:#b2b2b2;"></div>
<div style="left:152px;top:418px;width:1px;height:65px;background:#b2b2b2;"></div>
<div style="left:186px;top:418px;width:1px;height:65px;background:#b2b2b2;"></div>
<div style="left:221px;top:418px;width:1px;height:65px;background:#b2b2b2;"></div>
<div style="left:22px;top:546px;width:200px;height:1px;background:#b2b2b2;"></div>
<div style="left:22px;top:562px;width:200px;height:1px;background:#b2b2b2;"></div>
<div style="left:22px;top:578px;width:200px;height:1px;background:#b2b2b2;"></div>
<div style="left:22px;top:594px;width:200px;height:1px;background:#b2b2b2;"></div>
<div style="left:22px;top:610px;width:200px;height:1px;background:#b2b2b2;"></div>
<div style="left:22px;top:626px;width:200px;height:1px;background:#b2b2b2;"></div>
<div style="left:22px;top:642px;width:200px;height:1px;background:#b2b2b2;"></div>
<div style="left:22px;top:658px;width:200px;height:1px;background:#b2b2b2;"></div>
<div style="left:22px;top:674px;width:200px;height:1px;background:#b2b2b2;"></div>
<div style="left:22px;top:690px;width:200px;height:1px;background:#b2b2b2;"></div>
<div style="left:22px;top:706px;width:200px;height:1px;background:#b2b2b2;"></div>
<div style="left:22px;top:546px;width:1px;height:161px;background:#b2b2b2;"></div>
<div style="left:70px;top:546px;width:1px;height:161px;background:#b2b2b2;"></div>
<div style="left:108px;top:546px;width:1px;height:161px;background:#b2b2b2;"></div>
<div style="left:152px;top:546px;width:1px;height:161px;background:#b2b2b2;"></div>
<div style="left:186px;top:546px;width:1px;height:161px;background:#b2b2b2;"></div>
<div style="left:221px;top:546px;width:1px;height:161px;background:#b2b2b2;"></div>
<div style="left:23px;top:223px;width:371px;height:19px;background:#fff;"></div>
<div style="left:71px;top:243px;width:189px;height:15px;background:#fff;"></div>
<div style="left:187px;top:259px;width:286px;height:15px;background:#fff;"></div>
<div style="left:222px;top:307px;width:111px;height:15px;background:#fff;"></div>
<div style="left:222px;top:323px;width:111px;height:15px;background:#fff;"></div>
<div style="left:222px;top:339px;width:142px;height:15px;background:#fff;"></div>
<div style="left:222px;top:355px;width:213px;height:15px;background:#fff;"></div>
<div style="left:222px;top:371px;width:111px;height:15px;background:#fff;"></div>
<div style="left:71px;top:387px;width:441px;height:15px;background:#fff;"></div>
<div style="left:547px;top:243px;width:480px;height:15px;background:#fff;"></div>
<div style="left:547px;top:259px;width:236px;height:15px;background:#fff;"></div>
<div style="left:547px;top:275px;width:525px;height:15px;background:#fff;"></div>
<div style="left:547px;top:291px;width:274px;height:15px;background:#fff;"></div>
<div style="left:705px;top:499px;width:158px;height:15px;background:#fff;"></div>
<div style="left:705px;top:515px;width:116px;height:15px;background:#fff;"></div>
<div style="left:865px;top:515px;width:124px;height:15px;background:#fff;"></div>
<div style="left:547px;top:515px;width:156px;height:15px;background:#fff;"></div>
<div style="left:23px;top:499px;width:84px;height:15px;background:#fff;"></div>
<div style="left:991px;top:499px;width:173px;height:15px;background:#fff;"></div>
<div style="left:991px;top:515px;width:173px;height:15px;background:#fff;"></div>
<div style="left:1166px;top:499px;width:151px;height:15px;background:#fff;"></div>
<div style="left:1166px;top:515px;width:151px;height:15px;background:#fff;"></div>
<div style="left:25.60px;top:220.50px;width:347.76px;height:26px;line-height:26px;font-size:13px;font-weight:bold;color:#000;text-align:left;white-space:pre;transform:scaleX(1.0254);transform-origin:left;">Multi-item newsvendor model with demand substitution</div>
<div style="left:73.00px;top:239.69px;width:178.80px;height:22px;line-height:22px;font-size:11px;font-weight:bold;color:#000;text-align:left;white-space:pre;transform:scaleX(0.9525);transform-origin:left;">via a demand substitution matrix.</div>
<div style="left:72.00px;top:256.19px;width:30.88px;height:22px;line-height:22px;font-size:11px;font-weight:bold;color:#000;text-align:left;white-space:pre;transform:scaleX(0.9459);transform-origin:left;">BigM</div>
<div style="left:110.00px;top:256.19px;width:10.42px;height:22px;line-height:22px;font-size:11px;font-weight:bold;color:#000;text-align:left;white-space:pre;transform:scaleX(0.9556);transform-origin:left;">=</div>
<div style="left:161.65px;top:256.19px;width:22.35px;height:22px;line-height:22px;font-size:11px;font-weight:bold;color:#000;text-align:right;white-space:pre;transform:scaleX(1.0036);transform-origin:right;">300</div>
<div style="left:198.00px;top:255.69px;width:283.27px;height:22px;line-height:22px;font-size:11px;font-weight:bold;color:#000;text-align:left;white-space:pre;transform:scaleX(0.9417);transform-origin:left;">Upper limit(low as possible) on amount short or long.</div>
<div style="left:72.00px;top:272.19px;width:32.73px;height:22px;line-height:22px;font-size:11px;font-weight:bold;color:#000;text-align:left;white-space:pre;transform:scaleX(0.9588);transform-origin:left;">Items</div>
<div style="left:37.72px;top:288.19px;width:30.28px;height:22px;line-height:22px;font-size:11px;font-weight:bold;color:#000;text-align:right;white-space:pre;transform:scaleX(0.9914);transform-origin:right;">Item:</div>
<div style="left:21.84px;top:304.19px;width:46.16px;height:22px;line-height:22px;font-size:11px;font-weight:bold;color:#000;text-align:right;white-space:pre;transform:scaleX(0.8485);transform-origin:right;">COSTB:</div>
<div style="left:26.72px;top:320.19px;width:41.28px;height:22px;line-height:22px;font-size:11px;font-weight:bold;color:#000;text-align:right;white-space:pre;transform:scaleX(0.8449);transform-origin:right;">PRICE:</div>
<div style="left:23.06px;top:336.19px;width:44.94px;height:22px;line-height:22px;font-size:11px;font-weight:bold;color:#000;text-align:right;white-space:pre;transform:scaleX(0.8374);transform-origin:right;">COSTL:</div>
<div style="left:22.44px;top:352.19px;width:45.56px;height:22px;line-height:22px;font-size:11px;font-weight:bold;color:#000;text-align:right;white-space:pre;transform:scaleX(0.8363);transform-origin:right;">COSTS:</div>
<div style="left:30.38px;top:368.19px;width:37.62px;height:22px;line-height:22px;font-size:11px;font-weight:bold;color:#000;text-align:right;white-space:pre;transform:scaleX(0.8889);transform-origin:right;">Stock:</div>
<div style="left:71.44px;top:288.19px;width:34.56px;height:22px;line-height:22px;font-size:11px;font-weight:bold;color:#000;text-align:right;white-space:pre;transform:scaleX(0.9155);transform-origin:right;">SoxW</div>
<div style="left:71.44px;top:400.19px;width:34.56px;height:22px;line-height:22px;font-size:11px;font-weight:bold;color:#000;text-align:right;white-space:pre;transform:scaleX(0.9155);transform-origin:right;">SoxW</div>
<div style="left:117.27px;top:288.19px;width:32.73px;height:22px;line-height:22px;font-size:11px;font-weight:bold;color:#000;text-align:right;white-space:pre;transform:scaleX(0.8647);transform-origin:right;">SoxG</div>
<div style="left:117.27px;top:400.19px;width:32.73px;height:22px;line-height:22px;font-size:11px;font-weight:bold;color:#000;text-align:right;white-space:pre;transform:scaleX(0.8647);transform-origin:right;">SoxG</div>
<div style="left:151.88px;top:288.19px;width:32.12px;height:22px;line-height:22px;font-size:11px;font-weight:bold;color:#000;text-align:right;white-space:pre;transform:scaleX(0.8460);transform-origin:right;">SoxB</div>
<div style="left:151.88px;top:400.19px;width:32.12px;height:22px;line-height:22px;font-size:11px;font-weight:bold;color:#000;text-align:right;white-space:pre;transform:scaleX(0.8460);transform-origin:right;">SoxB</div>
<div style="left:186.88px;top:288.19px;width:32.12px;height:22px;line-height:22px;font-size:11px;font-weight:bold;color:#000;text-align:right;white-space:pre;transform:scaleX(0.8456);transform-origin:right;">SoxR</div>
<div style="left:186.88px;top:400.19px;width:32.12px;height:22px;line-height:22px;font-size:11px;font-weight:bold;color:#000;text-align:right;white-space:pre;transform:scaleX(0.8456);transform-origin:right;">SoxR</div>
<div style="left:95.88px;top:304.19px;width:10.12px;height:22px;line-height:22px;font-size:11px;font-weight:bold;color:#000;text-align:right;white-space:pre;transform:scaleX(1.0036);transform-origin:right;">5</div>
<div style="left:139.88px;top:304.19px;width:10.12px;height:22px;line-height:22px;font-size:11px;font-weight:bold;color:#000;text-align:right;white-space:pre;transform:scaleX(1.0036);transform-origin:right;">6</div>
<div style="left:173.88px;top:304.19px;width:10.12px;height:22px;line-height:22px;font-size:11px;font-weight:bold;color:#000;text-align:right;white-space:pre;transform:scaleX(1.0036);transform-origin:right;">6</div>
<div style="left:208.88px;top:304.19px;width:10.12px;height:22px;line-height:22px;font-size:11px;font-weight:bold;color:#000;text-align:right;white-space:pre;transform:scaleX(1.0036);transform-origin:right;">6</div>
<div style="left:89.77px;top:320.19px;width:16.23px;height:22px;line-height:22px;font-size:11px;font-weight:bold;color:#000;text-align:right;white-space:pre;transform:scaleX(1.0036);transform-origin:right;">10</div>
<div style="left:133.77px;top:320.19px;width:16.23px;height:22px;line-height:22px;font-size:11px;font-weight:bold;color:#000;text-align:right;white-space:pre;transform:scaleX(1.0036);transform-origin:right;">10</div>
<div style="left:167.77px;top:320.19px;width:16.23px;height:22px;line-height:22px;font-size:11px;font-weight:bold;color:#000;text-align:right;white-space:pre;transform:scaleX(1.0036);transform-origin:right;">10</div>
<div style="left:202.77px;top:320.19px;width:16.23px;height:22px;line-height:22px;font-size:11px;font-weight:bold;color:#000;text-align:right;white-space:pre;transform:scaleX(1.0036);transform-origin:right;">10</div>
<div style="left:92.22px;top:336.19px;width:13.78px;height:22px;line-height:22px;font-size:11px;font-weight:bold;color:#000;text-align:right;white-space:pre;transform:scaleX(1.0069);transform-origin:right;">-3</div>
<div style="left:136.22px;top:336.19px;width:13.78px;height:22px;line-height:22px;font-size:11px;font-weight:bold;color:#000;text-align:right;white-space:pre;transform:scaleX(1.0069);transform-origin:right;">-2</div>
<div style="left:170.22px;top:336.19px;width:13.78px;height:22px;line-height:22px;font-size:11px;font-weight:bold;color:#000;text-align:right;white-space:pre;transform:scaleX(1.0069);transform-origin:right;">-1</div>
<div style="left:205.22px;top:336.19px;width:13.78px;height:22px;line-height:22px;font-size:11px;font-weight:bold;color:#000;text-align:right;white-space:pre;transform:scaleX(1.0069);transform-origin:right;">-1</div>
<div style="left:95.88px;top:352.19px;width:10.12px;height:22px;line-height:22px;font-size:11px;font-weight:bold;color:#000;text-align:right;white-space:pre;transform:scaleX(1.0036);transform-origin:right;">4</div>
<div style="left:139.88px;top:352.19px;width:10.12px;height:22px;line-height:22px;font-size:11px;font-weight:bold;color:#000;text-align:right;white-space:pre;transform:scaleX(1.0036);transform-origin:right;">3</div>
<div style="left:173.88px;top:352.19px;width:10.12px;height:22px;line-height:22px;font-size:11px;font-weight:bold;color:#000;text-align:right;white-space:pre;transform:scaleX(1.0036);transform-origin:right;">2</div>
<div style="left:208.88px;top:352.19px;width:10.12px;height:22px;line-height:22px;font-size:11px;font-weight:bold;color:#000;text-align:right;white-space:pre;transform:scaleX(1.0036);transform-origin:right;">2</div>
<div style="left:84.26px;top:368.19px;width:21.74px;height:22px;line-height:22px;font-size:11px;font-weight:bold;color:#0000ff;text-align:right;white-space:pre;transform:scaleX(1.0379);transform-origin:right;">112</div>
<div style="left:133.77px;top:368.19px;width:16.23px;height:22px;line-height:22px;font-size:11px;font-weight:bold;color:#0000ff;text-align:right;white-space:pre;transform:scaleX(1.0036);transform-origin:right;">37</div>
<div style="left:167.77px;top:368.19px;width:16.23px;height:22px;line-height:22px;font-size:11px;font-weight:bold;color:#0000ff;text-align:right;white-space:pre;transform:scaleX(1.0036);transform-origin:right;">50</div>
<div style="left:202.77px;top:368.19px;width:16.23px;height:22px;line-height:22px;font-size:11px;font-weight:bold;color:#0000ff;text-align:right;white-space:pre;transform:scaleX(1.0036);transform-origin:right;">32</div>
<div style="left:230.00px;top:303.69px;width:87.70px;height:22px;line-height:22px;font-size:11px;font-weight:bold;color:#000;text-align:left;white-space:pre;transform:scaleX(0.9367);transform-origin:left;">Cost/unit to buy</div>
<div style="left:230.00px;top:319.69px;width:92.62px;height:22px;line-height:22px;font-size:11px;font-weight:bold;color:#000;text-align:left;white-space:pre;transform:scaleX(0.9366);transform-origin:left;">Selling price/unit</div>
<div style="left:230.00px;top:335.69px;width:134.75px;height:22px;line-height:22px;font-size:11px;font-weight:bold;color:#000;text-align:left;white-space:pre;transform:scaleX(0.9483);transform-origin:left;">Cost/unit left over (Long)</div>
<div style="left:233.30px;top:351.69px;width:197.10px;height:22px;line-height:22px;font-size:11px;font-weight:bold;color:#000;text-align:left;white-space:pre;transform:scaleX(0.9389);transform-origin:left;">Cost/unit unsatisfied demand (Short)</div>
<div style="left:230.00px;top:367.69px;width:100.60px;height:22px;line-height:22px;font-size:11px;font-weight:bold;color:#000;text-align:left;white-space:pre;transform:scaleX(0.9214);transform-origin:left;">Decision variables</div>
<div style="left:73.00px;top:383.69px;width:429.33px;height:22px;line-height:22px;font-size:11px;font-weight:bold;color:#000;text-align:left;white-space:pre;transform:scaleX(0.9569);transform-origin:left;">Fraction of demand that transfers to item <i>j</i>  (col) of amount short for item <i>i</i>  ( row).</div>
<div style="left:95.88px;top:416.19px;width:10.12px;height:22px;line-height:22px;font-size:11px;font-weight:bold;color:#000;text-align:right;white-space:pre;transform:scaleX(1.0036);transform-origin:right;">0</div>
<div style="left:130.71px;top:416.19px;width:19.29px;height:22px;line-height:22px;font-size:11px;font-weight:bold;color:#000;text-align:right;white-space:pre;transform:scaleX(1.0030);transform-origin:right;">0.1</div>
<div style="left:164.71px;top:416.19px;width:19.29px;height:22px;line-height:22px;font-size:11px;font-weight:bold;color:#000;text-align:right;white-space:pre;transform:scaleX(1.0030);transform-origin:right;">0.3</div>
<div style="left:199.71px;top:416.19px;width:19.29px;height:22px;line-height:22px;font-size:11px;font-weight:bold;color:#000;text-align:right;white-space:pre;transform:scaleX(1.0030);transform-origin:right;">0.2</div>
<div style="left:86.71px;top:432.19px;width:19.29px;height:22px;line-height:22px;font-size:11px;font-weight:bold;color:#000;text-align:right;white-space:pre;transform:scaleX(1.0030);transform-origin:right;">0.2</div>
<div style="left:139.88px;top:432.19px;width:10.12px;height:22px;line-height:22px;font-size:11px;font-weight:bold;color:#000;text-align:right;white-space:pre;transform:scaleX(1.0036);transform-origin:right;">0</div>
<div style="left:164.71px;top:432.19px;width:19.29px;height:22px;line-height:22px;font-size:11px;font-weight:bold;color:#000;text-align:right;white-space:pre;transform:scaleX(1.0030);transform-origin:right;">0.1</div>
<div style="left:199.71px;top:432.19px;width:19.29px;height:22px;line-height:22px;font-size:11px;font-weight:bold;color:#000;text-align:right;white-space:pre;transform:scaleX(1.0030);transform-origin:right;">0.5</div>
<div style="left:86.71px;top:448.19px;width:19.29px;height:22px;line-height:22px;font-size:11px;font-weight:bold;color:#000;text-align:right;white-space:pre;transform:scaleX(1.0030);transform-origin:right;">0.2</div>
<div style="left:130.71px;top:448.19px;width:19.29px;height:22px;line-height:22px;font-size:11px;font-weight:bold;color:#000;text-align:right;white-space:pre;transform:scaleX(1.0030);transform-origin:right;">0.2</div>
<div style="left:173.88px;top:448.19px;width:10.12px;height:22px;line-height:22px;font-size:11px;font-weight:bold;color:#000;text-align:right;white-space:pre;transform:scaleX(1.0036);transform-origin:right;">0</div>
<div style="left:199.71px;top:448.19px;width:19.29px;height:22px;line-height:22px;font-size:11px;font-weight:bold;color:#000;text-align:right;white-space:pre;transform:scaleX(1.0030);transform-origin:right;">0.2</div>
<div style="left:86.71px;top:464.19px;width:19.29px;height:22px;line-height:22px;font-size:11px;font-weight:bold;color:#000;text-align:right;white-space:pre;transform:scaleX(1.0030);transform-origin:right;">0.1</div>
<div style="left:130.71px;top:464.19px;width:19.29px;height:22px;line-height:22px;font-size:11px;font-weight:bold;color:#000;text-align:right;white-space:pre;transform:scaleX(1.0030);transform-origin:right;">0.6</div>
<div style="left:164.71px;top:464.19px;width:19.29px;height:22px;line-height:22px;font-size:11px;font-weight:bold;color:#000;text-align:right;white-space:pre;transform:scaleX(1.0030);transform-origin:right;">0.2</div>
<div style="left:208.88px;top:464.19px;width:10.12px;height:22px;line-height:22px;font-size:11px;font-weight:bold;color:#000;text-align:right;white-space:pre;transform:scaleX(1.0036);transform-origin:right;">0</div>
<div style="left:38.34px;top:496.19px;width:67.66px;height:22px;line-height:22px;font-size:11px;font-weight:bold;color:#000;text-align:right;white-space:pre;transform:scaleX(0.9616);transform-origin:right;">Total Profit=</div>
<div style="left:112.36px;top:496.19px;width:37.64px;height:22px;line-height:22px;font-size:11px;font-weight:bold;color:#000;text-align:right;white-space:pre;transform:scaleX(1.0033);transform-origin:right;">851.01</div>
<svg style="left:109px;top:499px" width="7" height="7" viewBox="0 0 7 7"><path d="M0 0h6L0 6z" fill="#1e7a3c"/></svg>
<div style="left:552.40px;top:239.69px;width:409.75px;height:22px;line-height:22px;font-size:11px;color:#000;text-align:left;white-space:pre;transform:scaleX(1.1081);transform-origin:left;">Keywords: Assortment planning, Consumer choice, Demand substitution, Inventory,</div>
<div style="left:559.00px;top:255.69px;width:195.97px;height:22px;line-height:22px;font-size:11px;color:#000;text-align:left;white-space:pre;transform:scaleX(1.1085);transform-origin:left;">Newsvendor, Substitution,  Uncertainty;</div>
<div style="left:549.30px;top:271.69px;width:485.67px;height:22px;line-height:22px;font-size:11px;color:#000;text-align:left;white-space:pre;transform:scaleX(1.0617);transform-origin:left;">Ref: Eppen, G., R. Kipp Martin and L. Schrage (1989),&quot;A Scenario Approach to Capacity Planning,&quot;</div>
<div style="left:549.30px;top:287.69px;width:230.85px;height:22px;line-height:22px;font-size:11px;color:#000;text-align:left;white-space:pre;transform:scaleX(1.0523);transform-origin:left;">Operations Research, 37, no. 4, pp. 517-527. ;</div>
<div style="left:707.40px;top:495.69px;width:116.90px;height:22px;line-height:22px;font-size:11px;color:#000;text-align:left;white-space:pre;transform:scaleX(1.1071);transform-origin:left;">Total Demand Effective</div>
<div style="left:710.00px;top:511.69px;width:100.29px;height:22px;line-height:22px;font-size:11px;color:#000;text-align:left;white-space:pre;transform:scaleX(1.0988);transform-origin:left;">Origional + In -  Out</div>
<div style="left:867.00px;top:511.69px;width:113.53px;height:22px;line-height:22px;font-size:11px;color:#000;text-align:left;white-space:pre;transform:scaleX(1.0572);transform-origin:left;">Sales= DemEff - Short</div>
<div style="left:1014px;top:498px;width:151px;height:16px;overflow:hidden;">
<div style="left:0.00px;top:-2.31px;width:158.36px;height:22px;line-height:22px;font-size:11px;color:#000;text-align:left;white-space:pre;transform:scaleX(1.0809);transform-origin:left;">Profit= Price*sales - Cost*Stock</div>
</div>
<div style="left:1014.20px;top:511.69px;width:132.39px;height:22px;line-height:22px;font-size:11px;color:#000;text-align:left;white-space:pre;transform:scaleX(1.0304);transform-origin:left;">- CostL*Long-CostS*Short</div>
<div style="left:1195.60px;top:495.69px;width:98.76px;height:22px;line-height:22px;font-size:11px;color:#000;text-align:left;white-space:pre;transform:scaleX(1.0258);transform-origin:left;">Force  Long - Short</div>
<div style="left:1192.30px;top:511.69px;width:87.24px;height:22px;line-height:22px;font-size:11px;color:#000;text-align:left;white-space:pre;transform:scaleX(1.0236);transform-origin:left;">= Stock - DemEff</div>
<div style="left:263.90px;top:511.69px;width:28.47px;height:22px;line-height:22px;font-size:11px;color:#000;text-align:left;white-space:pre;transform:scaleX(1.0136);transform-origin:left;">Long</div>
<div style="left:354.14px;top:512.19px;width:6.86px;height:22px;line-height:22px;font-size:11px;color:#000;text-align:right;white-space:pre;">|</div>
<div style="left:403.71px;top:511.69px;width:30.29px;height:22px;line-height:22px;font-size:11px;color:#000;text-align:right;white-space:pre;transform:scaleX(1.0803);transform-origin:right;">Short</div>
<div style="left:502.14px;top:512.19px;width:6.86px;height:22px;line-height:22px;font-size:11px;color:#000;text-align:right;white-space:pre;">|</div>
<div style="left:549.50px;top:511.69px;width:113.43px;height:22px;line-height:22px;font-size:11px;color:#000;text-align:left;white-space:pre;transform:scaleX(1.1221);transform-origin:left;">Demand transferred in</div>
<div style="left:23px;top:531px;width:47px;height:15px;overflow:hidden;">
<div style="left:2.00px;top:-3.31px;width:47.41px;height:22px;line-height:22px;font-size:11px;color:#000;text-align:left;white-space:pre;transform:scaleX(1.1057);transform-origin:left;">Scenario</div>
</div>
<div style="left:72.66px;top:528.19px;width:33.34px;height:22px;line-height:22px;font-size:11px;color:#000;text-align:right;white-space:pre;transform:scaleX(0.9447);transform-origin:right;">SoxW</div>
<div style="left:118.49px;top:528.19px;width:31.51px;height:22px;line-height:22px;font-size:11px;color:#000;text-align:right;white-space:pre;transform:scaleX(0.8946);transform-origin:right;">SoxG</div>
<div style="left:153.71px;top:528.19px;width:30.29px;height:22px;line-height:22px;font-size:11px;color:#000;text-align:right;white-space:pre;transform:scaleX(0.8963);transform-origin:right;">SoxB</div>
<div style="left:188.10px;top:528.19px;width:30.90px;height:22px;line-height:22px;font-size:11px;color:#000;text-align:right;white-space:pre;transform:scaleX(0.8757);transform-origin:right;">SoxR</div>
<div style="left:225.66px;top:528.19px;width:33.34px;height:22px;line-height:22px;font-size:11px;color:#000;text-align:right;white-space:pre;transform:scaleX(0.9447);transform-origin:right;">SoxW</div>
<div style="left:261.49px;top:528.19px;width:31.51px;height:22px;line-height:22px;font-size:11px;color:#000;text-align:right;white-space:pre;transform:scaleX(0.8946);transform-origin:right;">SoxG</div>
<div style="left:301.71px;top:528.19px;width:30.29px;height:22px;line-height:22px;font-size:11px;color:#000;text-align:right;white-space:pre;transform:scaleX(0.8963);transform-origin:right;">SoxB</div>
<div style="left:332.10px;top:528.19px;width:30.90px;height:22px;line-height:22px;font-size:11px;color:#000;text-align:right;white-space:pre;transform:scaleX(0.8757);transform-origin:right;">SoxR</div>
<div style="left:366px;top:531px;width:29px;height:15px;overflow:hidden;">
<div style="left:-6.34px;top:-3.31px;width:33.34px;height:22px;line-height:22px;font-size:11px;color:#000;text-align:right;white-space:pre;transform:scaleX(1.0396);transform-origin:right;">SoxW</div>
</div>
<div style="left:402.49px;top:528.19px;width:31.51px;height:22px;line-height:22px;font-size:11px;color:#000;text-align:right;white-space:pre;transform:scaleX(0.8946);transform-origin:right;">SoxG</div>
<div style="left:441.71px;top:528.19px;width:30.29px;height:22px;line-height:22px;font-size:11px;color:#000;text-align:right;white-space:pre;transform:scaleX(0.8963);transform-origin:right;">SoxB</div>
<div style="left:480.10px;top:528.19px;width:30.90px;height:22px;line-height:22px;font-size:11px;color:#000;text-align:right;white-space:pre;transform:scaleX(0.8757);transform-origin:right;">SoxR</div>
<div style="left:510.66px;top:528.19px;width:33.34px;height:22px;line-height:22px;font-size:11px;color:#000;text-align:right;white-space:pre;transform:scaleX(0.9447);transform-origin:right;">SoxW</div>
<div style="left:554.49px;top:528.19px;width:31.51px;height:22px;line-height:22px;font-size:11px;color:#000;text-align:right;white-space:pre;transform:scaleX(0.8946);transform-origin:right;">SoxG</div>
<div style="left:588.71px;top:528.19px;width:30.29px;height:22px;line-height:22px;font-size:11px;color:#000;text-align:right;white-space:pre;transform:scaleX(0.8963);transform-origin:right;">SoxB</div>
<div style="left:631.10px;top:528.19px;width:30.90px;height:22px;line-height:22px;font-size:11px;color:#000;text-align:right;white-space:pre;transform:scaleX(0.8757);transform-origin:right;">SoxR</div>
<div style="left:668.66px;top:528.19px;width:33.34px;height:22px;line-height:22px;font-size:11px;color:#000;text-align:right;white-space:pre;transform:scaleX(0.9447);transform-origin:right;">SoxW</div>
<div style="left:708.49px;top:528.19px;width:31.51px;height:22px;line-height:22px;font-size:11px;color:#000;text-align:right;white-space:pre;transform:scaleX(0.8946);transform-origin:right;">SoxG</div>
<div style="left:751.71px;top:528.19px;width:30.29px;height:22px;line-height:22px;font-size:11px;color:#000;text-align:right;white-space:pre;transform:scaleX(0.8963);transform-origin:right;">SoxB</div>
<div style="left:789.10px;top:528.19px;width:30.90px;height:22px;line-height:22px;font-size:11px;color:#000;text-align:right;white-space:pre;transform:scaleX(0.8757);transform-origin:right;">SoxR</div>
<div style="left:828.66px;top:528.19px;width:33.34px;height:22px;line-height:22px;font-size:11px;color:#000;text-align:right;white-space:pre;transform:scaleX(0.9447);transform-origin:right;">SoxW</div>
<div style="left:872.49px;top:528.19px;width:31.51px;height:22px;line-height:22px;font-size:11px;color:#000;text-align:right;white-space:pre;transform:scaleX(0.8946);transform-origin:right;">SoxG</div>
<div style="left:915.71px;top:528.19px;width:30.29px;height:22px;line-height:22px;font-size:11px;color:#000;text-align:right;white-space:pre;transform:scaleX(0.8963);transform-origin:right;">SoxB</div>
<div style="left:957.10px;top:528.19px;width:30.90px;height:22px;line-height:22px;font-size:11px;color:#000;text-align:right;white-space:pre;transform:scaleX(0.8757);transform-origin:right;">SoxR</div>
<div style="left:992.66px;top:528.19px;width:33.34px;height:22px;line-height:22px;font-size:11px;color:#000;text-align:right;white-space:pre;transform:scaleX(0.9447);transform-origin:right;">SoxW</div>
<div style="left:1039.49px;top:528.19px;width:31.51px;height:22px;line-height:22px;font-size:11px;color:#000;text-align:right;white-space:pre;transform:scaleX(0.8946);transform-origin:right;">SoxG</div>
<div style="left:1082.71px;top:528.19px;width:30.29px;height:22px;line-height:22px;font-size:11px;color:#000;text-align:right;white-space:pre;transform:scaleX(0.8963);transform-origin:right;">SoxB</div>
<div style="left:1132.10px;top:528.19px;width:30.90px;height:22px;line-height:22px;font-size:11px;color:#000;text-align:right;white-space:pre;transform:scaleX(0.8757);transform-origin:right;">SoxR</div>
<div style="left:1180.66px;top:528.19px;width:33.34px;height:22px;line-height:22px;font-size:11px;color:#000;text-align:right;white-space:pre;transform:scaleX(0.9447);transform-origin:right;">SoxW</div>
<div style="left:1233.49px;top:528.19px;width:31.51px;height:22px;line-height:22px;font-size:11px;color:#000;text-align:right;white-space:pre;transform:scaleX(0.8946);transform-origin:right;">SoxG</div>
<div style="left:1285.71px;top:528.19px;width:30.29px;height:22px;line-height:22px;font-size:11px;color:#000;text-align:right;white-space:pre;transform:scaleX(0.8963);transform-origin:right;">SoxB</div>
<div style="left:1336.10px;top:528.19px;width:30.90px;height:22px;line-height:22px;font-size:11px;color:#000;text-align:right;white-space:pre;transform:scaleX(0.8757);transform-origin:right;">SoxR</div>
<div style="left:57.88px;top:544.19px;width:10.12px;height:22px;line-height:22px;font-size:11px;color:#000;text-align:right;white-space:pre;transform:scaleX(0.9943);transform-origin:right;">1</div>
<div style="left:89.77px;top:544.19px;width:16.23px;height:22px;line-height:22px;font-size:11px;color:#000;text-align:right;white-space:pre;transform:scaleX(0.9943);transform-origin:right;">91</div>
<div style="left:133.77px;top:544.19px;width:16.23px;height:22px;line-height:22px;font-size:11px;color:#000;text-align:right;white-space:pre;transform:scaleX(0.9943);transform-origin:right;">30</div>
<div style="left:167.77px;top:544.19px;width:16.23px;height:22px;line-height:22px;font-size:11px;color:#000;text-align:right;white-space:pre;transform:scaleX(0.9943);transform-origin:right;">49</div>
<div style="left:202.77px;top:544.19px;width:16.23px;height:22px;line-height:22px;font-size:11px;color:#000;text-align:right;white-space:pre;transform:scaleX(0.9943);transform-origin:right;">37</div>
<div style="left:227.48px;top:544.19px;width:31.52px;height:22px;line-height:22px;font-size:11px;color:#0000ff;text-align:right;white-space:pre;transform:scaleX(0.9939);transform-origin:right;">20.74</div>
<div style="left:267.59px;top:544.19px;width:25.41px;height:22px;line-height:22px;font-size:11px;color:#0000ff;text-align:right;white-space:pre;transform:scaleX(0.9939);transform-origin:right;">5.42</div>
<div style="left:306.59px;top:544.19px;width:25.41px;height:22px;line-height:22px;font-size:11px;color:#0000ff;text-align:right;white-space:pre;transform:scaleX(0.9939);transform-origin:right;">0.47</div>
<div style="left:337.59px;top:544.19px;width:25.41px;height:22px;line-height:22px;font-size:11px;color:#0000ff;text-align:right;white-space:pre;transform:scaleX(0.9939);transform-origin:right;">0.00</div>
<div style="left:367.59px;top:544.19px;width:25.41px;height:22px;line-height:22px;font-size:11px;color:#0000ff;text-align:right;white-space:pre;transform:scaleX(0.9939);transform-origin:right;">0.00</div>
<div style="left:408.59px;top:544.19px;width:25.41px;height:22px;line-height:22px;font-size:11px;color:#0000ff;text-align:right;white-space:pre;transform:scaleX(0.9939);transform-origin:right;">0.00</div>
<div style="left:446.59px;top:544.19px;width:25.41px;height:22px;line-height:22px;font-size:11px;color:#0000ff;text-align:right;white-space:pre;transform:scaleX(0.9939);transform-origin:right;">0.00</div>
<div style="left:485.59px;top:544.19px;width:25.41px;height:22px;line-height:22px;font-size:11px;color:#0000ff;text-align:right;white-space:pre;transform:scaleX(0.9939);transform-origin:right;">2.63</div>
<div style="left:518.59px;top:544.19px;width:25.41px;height:22px;line-height:22px;font-size:11px;color:#000;text-align:right;white-space:pre;transform:scaleX(0.9939);transform-origin:right;">0.26</div>
<div style="left:560.59px;top:544.19px;width:25.41px;height:22px;line-height:22px;font-size:11px;color:#000;text-align:right;white-space:pre;transform:scaleX(0.9939);transform-origin:right;">1.58</div>
<div style="left:593.59px;top:544.19px;width:25.41px;height:22px;line-height:22px;font-size:11px;color:#000;text-align:right;white-space:pre;transform:scaleX(0.9939);transform-origin:right;">0.53</div>
<div style="left:636.59px;top:544.19px;width:25.41px;height:22px;line-height:22px;font-size:11px;color:#000;text-align:right;white-space:pre;transform:scaleX(0.9939);transform-origin:right;">0.00</div>
<div style="left:670.48px;top:544.19px;width:31.52px;height:22px;line-height:22px;font-size:11px;color:#000;text-align:right;white-space:pre;transform:scaleX(0.9939);transform-origin:right;">91.26</div>
<div style="left:708.48px;top:544.19px;width:31.52px;height:22px;line-height:22px;font-size:11px;color:#000;text-align:right;white-space:pre;transform:scaleX(0.9939);transform-origin:right;">31.58</div>
<div style="left:750.48px;top:544.19px;width:31.52px;height:22px;line-height:22px;font-size:11px;color:#000;text-align:right;white-space:pre;transform:scaleX(0.9939);transform-origin:right;">49.53</div>
<div style="left:788.48px;top:544.19px;width:31.52px;height:22px;line-height:22px;font-size:11px;color:#000;text-align:right;white-space:pre;transform:scaleX(0.9939);transform-origin:right;">34.63</div>
<div style="left:830.48px;top:544.19px;width:31.52px;height:22px;line-height:22px;font-size:11px;color:#000;text-align:right;white-space:pre;transform:scaleX(0.9939);transform-origin:right;">91.26</div>
<div style="left:872.48px;top:544.19px;width:31.52px;height:22px;line-height:22px;font-size:11px;color:#000;text-align:right;white-space:pre;transform:scaleX(0.9939);transform-origin:right;">31.58</div>
<div style="left:914.48px;top:544.19px;width:31.52px;height:22px;line-height:22px;font-size:11px;color:#000;text-align:right;white-space:pre;transform:scaleX(0.9939);transform-origin:right;">49.53</div>
<div style="left:956.48px;top:544.19px;width:31.52px;height:22px;line-height:22px;font-size:11px;color:#000;text-align:right;white-space:pre;transform:scaleX(0.9939);transform-origin:right;">32.00</div>
<div style="left:988.36px;top:544.19px;width:37.64px;height:22px;line-height:22px;font-size:11px;color:#000;text-align:right;white-space:pre;transform:scaleX(0.9940);transform-origin:right;">414.84</div>
<div style="left:1033.36px;top:544.19px;width:37.64px;height:22px;line-height:22px;font-size:11px;color:#000;text-align:right;white-space:pre;transform:scaleX(0.9940);transform-origin:right;">104.63</div>
<div style="left:1075.36px;top:544.19px;width:37.64px;height:22px;line-height:22px;font-size:11px;color:#000;text-align:right;white-space:pre;transform:scaleX(0.9940);transform-origin:right;">195.74</div>
<div style="left:1125.36px;top:544.19px;width:37.64px;height:22px;line-height:22px;font-size:11px;color:#000;text-align:right;white-space:pre;transform:scaleX(0.9940);transform-origin:right;">122.74</div>
<div style="left:1185.29px;top:544.19px;width:10.42px;height:22px;line-height:22px;font-size:11px;color:#000;text-align:center;white-space:pre;transform:scaleX(0.9467);transform-origin:center;">=</div>
<svg style="left:1166px;top:547px" width="6" height="6" viewBox="0 0 6 6"><path d="M0 0h6L0 6z" fill="#1e7a3c"/></svg>
<div style="left:1236.29px;top:544.19px;width:10.42px;height:22px;line-height:22px;font-size:11px;color:#000;text-align:center;white-space:pre;transform:scaleX(0.9467);transform-origin:center;">=</div>
<svg style="left:1217px;top:547px" width="6" height="6" viewBox="0 0 6 6"><path d="M0 0h6L0 6z" fill="#1e7a3c"/></svg>
<div style="left:1287.29px;top:544.19px;width:10.42px;height:22px;line-height:22px;font-size:11px;color:#000;text-align:center;white-space:pre;transform:scaleX(0.9467);transform-origin:center;">=</div>
<svg style="left:1268px;top:547px" width="6" height="6" viewBox="0 0 6 6"><path d="M0 0h6L0 6z" fill="#1e7a3c"/></svg>
<div style="left:1338.29px;top:544.19px;width:10.42px;height:22px;line-height:22px;font-size:11px;color:#000;text-align:center;white-space:pre;transform:scaleX(0.9467);transform-origin:center;">=</div>
<svg style="left:1319px;top:547px" width="6" height="6" viewBox="0 0 6 6"><path d="M0 0h6L0 6z" fill="#1e7a3c"/></svg>
<div style="left:57.88px;top:560.19px;width:10.12px;height:22px;line-height:22px;font-size:11px;color:#000;text-align:right;white-space:pre;transform:scaleX(0.9943);transform-origin:right;">2</div>
<div style="left:84.47px;top:560.19px;width:21.53px;height:22px;line-height:22px;font-size:11px;color:#000;text-align:right;white-space:pre;transform:scaleX(1.0406);transform-origin:right;">110</div>
<div style="left:133.77px;top:560.19px;width:16.23px;height:22px;line-height:22px;font-size:11px;color:#000;text-align:right;white-space:pre;transform:scaleX(0.9943);transform-origin:right;">33</div>
<div style="left:167.77px;top:560.19px;width:16.23px;height:22px;line-height:22px;font-size:11px;color:#000;text-align:right;white-space:pre;transform:scaleX(0.9943);transform-origin:right;">55</div>
<div style="left:202.77px;top:560.19px;width:16.23px;height:22px;line-height:22px;font-size:11px;color:#000;text-align:right;white-space:pre;transform:scaleX(0.9943);transform-origin:right;">40</div>
<div style="left:233.59px;top:560.19px;width:25.41px;height:22px;line-height:22px;font-size:11px;color:#0000ff;text-align:right;white-space:pre;transform:scaleX(0.9939);transform-origin:right;">0.80</div>
<div style="left:267.59px;top:560.19px;width:25.41px;height:22px;line-height:22px;font-size:11px;color:#0000ff;text-align:right;white-space:pre;transform:scaleX(0.9939);transform-origin:right;">0.50</div>
<div style="left:306.59px;top:560.19px;width:25.41px;height:22px;line-height:22px;font-size:11px;color:#0000ff;text-align:right;white-space:pre;transform:scaleX(0.9939);transform-origin:right;">0.00</div>
<div style="left:337.59px;top:560.19px;width:25.41px;height:22px;line-height:22px;font-size:11px;color:#0000ff;text-align:right;white-space:pre;transform:scaleX(0.9939);transform-origin:right;">0.00</div>
<div style="left:367.59px;top:560.19px;width:25.41px;height:22px;line-height:22px;font-size:11px;color:#0000ff;text-align:right;white-space:pre;transform:scaleX(0.9939);transform-origin:right;">0.00</div>
<div style="left:408.59px;top:560.19px;width:25.41px;height:22px;line-height:22px;font-size:11px;color:#0000ff;text-align:right;white-space:pre;transform:scaleX(0.9939);transform-origin:right;">0.00</div>
<div style="left:446.59px;top:560.19px;width:25.41px;height:22px;line-height:22px;font-size:11px;color:#0000ff;text-align:right;white-space:pre;transform:scaleX(0.9939);transform-origin:right;">3.70</div>
<div style="left:485.59px;top:560.19px;width:25.41px;height:22px;line-height:22px;font-size:11px;color:#0000ff;text-align:right;white-space:pre;transform:scaleX(0.9939);transform-origin:right;">4.60</div>
<div style="left:518.59px;top:560.19px;width:25.41px;height:22px;line-height:22px;font-size:11px;color:#000;text-align:right;white-space:pre;transform:scaleX(0.9939);transform-origin:right;">1.20</div>
<div style="left:560.59px;top:560.19px;width:25.41px;height:22px;line-height:22px;font-size:11px;color:#000;text-align:right;white-space:pre;transform:scaleX(0.9939);transform-origin:right;">3.50</div>
<div style="left:593.59px;top:560.19px;width:25.41px;height:22px;line-height:22px;font-size:11px;color:#000;text-align:right;white-space:pre;transform:scaleX(0.9939);transform-origin:right;">0.92</div>
<div style="left:636.59px;top:560.19px;width:25.41px;height:22px;line-height:22px;font-size:11px;color:#000;text-align:right;white-space:pre;transform:scaleX(0.9939);transform-origin:right;">0.74</div>
<div style="left:665.99px;top:560.19px;width:36.01px;height:22px;line-height:22px;font-size:11px;color:#000;text-align:right;white-space:pre;transform:scaleX(1.0447);transform-origin:right;">111.20</div>
<div style="left:708.48px;top:560.19px;width:31.52px;height:22px;line-height:22px;font-size:11px;color:#000;text-align:right;white-space:pre;transform:scaleX(0.9939);transform-origin:right;">36.50</div>
<div style="left:750.48px;top:560.19px;width:31.52px;height:22px;line-height:22px;font-size:11px;color:#000;text-align:right;white-space:pre;transform:scaleX(0.9939);transform-origin:right;">53.70</div>
<div style="left:788.48px;top:560.19px;width:31.52px;height:22px;line-height:22px;font-size:11px;color:#000;text-align:right;white-space:pre;transform:scaleX(0.9939);transform-origin:right;">36.60</div>
<div style="left:825.99px;top:560.19px;width:36.01px;height:22px;line-height:22px;font-size:11px;color:#000;text-align:right;white-space:pre;transform:scaleX(1.0447);transform-origin:right;">111.20</div>
<div style="left:872.48px;top:560.19px;width:31.52px;height:22px;line-height:22px;font-size:11px;color:#000;text-align:right;white-space:pre;transform:scaleX(0.9939);transform-origin:right;">36.50</div>
<div style="left:914.48px;top:560.19px;width:31.52px;height:22px;line-height:22px;font-size:11px;color:#000;text-align:right;white-space:pre;transform:scaleX(0.9939);transform-origin:right;">50.00</div>
<div style="left:956.48px;top:560.19px;width:31.52px;height:22px;line-height:22px;font-size:11px;color:#000;text-align:right;white-space:pre;transform:scaleX(0.9939);transform-origin:right;">32.00</div>
<div style="left:988.36px;top:560.19px;width:37.64px;height:22px;line-height:22px;font-size:11px;color:#000;text-align:right;white-space:pre;transform:scaleX(0.9940);transform-origin:right;">554.40</div>
<div style="left:1033.36px;top:560.19px;width:37.64px;height:22px;line-height:22px;font-size:11px;color:#000;text-align:right;white-space:pre;transform:scaleX(0.9940);transform-origin:right;">144.00</div>
<div style="left:1075.36px;top:560.19px;width:37.64px;height:22px;line-height:22px;font-size:11px;color:#000;text-align:right;white-space:pre;transform:scaleX(0.9940);transform-origin:right;">192.60</div>
<div style="left:1126.18px;top:560.19px;width:36.82px;height:22px;line-height:22px;font-size:11px;color:#000;text-align:right;white-space:pre;transform:scaleX(1.0187);transform-origin:right;">118.80</div>
<div style="left:1185.29px;top:560.19px;width:10.42px;height:22px;line-height:22px;font-size:11px;color:#000;text-align:center;white-space:pre;transform:scaleX(0.9467);transform-origin:center;">=</div>
<svg style="left:1166px;top:563px" width="6" height="6" viewBox="0 0 6 6"><path d="M0 0h6L0 6z" fill="#1e7a3c"/></svg>
<div style="left:1236.29px;top:560.19px;width:10.42px;height:22px;line-height:22px;font-size:11px;color:#000;text-align:center;white-space:pre;transform:scaleX(0.9467);transform-origin:center;">=</div>
<svg style="left:1217px;top:563px" width="6" height="6" viewBox="0 0 6 6"><path d="M0 0h6L0 6z" fill="#1e7a3c"/></svg>
<div style="left:1287.29px;top:560.19px;width:10.42px;height:22px;line-height:22px;font-size:11px;color:#000;text-align:center;white-space:pre;transform:scaleX(0.9467);transform-origin:center;">=</div>
<svg style="left:1268px;top:563px" width="6" height="6" viewBox="0 0 6 6"><path d="M0 0h6L0 6z" fill="#1e7a3c"/></svg>
<div style="left:1338.29px;top:560.19px;width:10.42px;height:22px;line-height:22px;font-size:11px;color:#000;text-align:center;white-space:pre;transform:scaleX(0.9467);transform-origin:center;">=</div>
<svg style="left:1319px;top:563px" width="6" height="6" viewBox="0 0 6 6"><path d="M0 0h6L0 6z" fill="#1e7a3c"/></svg>
<div style="left:57.88px;top:576.19px;width:10.12px;height:22px;line-height:22px;font-size:11px;color:#000;text-align:right;white-space:pre;transform:scaleX(0.9943);transform-origin:right;">3</div>
<div style="left:85.28px;top:576.19px;width:20.72px;height:22px;line-height:22px;font-size:11px;color:#000;text-align:right;white-space:pre;transform:scaleX(1.0914);transform-origin:right;">111</div>
<div style="left:133.77px;top:576.19px;width:16.23px;height:22px;line-height:22px;font-size:11px;color:#000;text-align:right;white-space:pre;transform:scaleX(0.9943);transform-origin:right;">40</div>
<div style="left:167.77px;top:576.19px;width:16.23px;height:22px;line-height:22px;font-size:11px;color:#000;text-align:right;white-space:pre;transform:scaleX(0.9943);transform-origin:right;">57</div>
<div style="left:202.77px;top:576.19px;width:16.23px;height:22px;line-height:22px;font-size:11px;color:#000;text-align:right;white-space:pre;transform:scaleX(0.9943);transform-origin:right;">30</div>
<div style="left:233.59px;top:576.19px;width:25.41px;height:22px;line-height:22px;font-size:11px;color:#0000ff;text-align:right;white-space:pre;transform:scaleX(0.9939);transform-origin:right;">0.00</div>
<div style="left:267.59px;top:576.19px;width:25.41px;height:22px;line-height:22px;font-size:11px;color:#0000ff;text-align:right;white-space:pre;transform:scaleX(0.9939);transform-origin:right;">0.00</div>
<div style="left:306.59px;top:576.19px;width:25.41px;height:22px;line-height:22px;font-size:11px;color:#0000ff;text-align:right;white-space:pre;transform:scaleX(0.9939);transform-origin:right;">0.00</div>
<div style="left:337.59px;top:576.19px;width:25.41px;height:22px;line-height:22px;font-size:11px;color:#0000ff;text-align:right;white-space:pre;transform:scaleX(0.9939);transform-origin:right;">0.00</div>
<div style="left:367.59px;top:576.19px;width:25.41px;height:22px;line-height:22px;font-size:11px;color:#0000ff;text-align:right;white-space:pre;transform:scaleX(0.9939);transform-origin:right;">0.22</div>
<div style="left:408.59px;top:576.19px;width:25.41px;height:22px;line-height:22px;font-size:11px;color:#0000ff;text-align:right;white-space:pre;transform:scaleX(0.9939);transform-origin:right;">2.19</div>
<div style="left:446.59px;top:576.19px;width:25.41px;height:22px;line-height:22px;font-size:11px;color:#0000ff;text-align:right;white-space:pre;transform:scaleX(0.9939);transform-origin:right;">4.56</div>
<div style="left:485.59px;top:576.19px;width:25.41px;height:22px;line-height:22px;font-size:11px;color:#0000ff;text-align:right;white-space:pre;transform:scaleX(0.9939);transform-origin:right;">0.03</div>
<div style="left:518.59px;top:576.19px;width:25.41px;height:22px;line-height:22px;font-size:11px;color:#000;text-align:right;white-space:pre;transform:scaleX(0.9939);transform-origin:right;">1.35</div>
<div style="left:560.59px;top:576.19px;width:25.41px;height:22px;line-height:22px;font-size:11px;color:#000;text-align:right;white-space:pre;transform:scaleX(0.9939);transform-origin:right;">0.95</div>
<div style="left:593.59px;top:576.19px;width:25.41px;height:22px;line-height:22px;font-size:11px;color:#000;text-align:right;white-space:pre;transform:scaleX(0.9939);transform-origin:right;">0.29</div>
<div style="left:636.59px;top:576.19px;width:25.41px;height:22px;line-height:22px;font-size:11px;color:#000;text-align:right;white-space:pre;transform:scaleX(0.9939);transform-origin:right;">2.05</div>
<div style="left:665.18px;top:576.19px;width:36.82px;height:22px;line-height:22px;font-size:11px;color:#000;text-align:right;white-space:pre;transform:scaleX(1.0187);transform-origin:right;">112.22</div>
<div style="left:708.48px;top:576.19px;width:31.52px;height:22px;line-height:22px;font-size:11px;color:#000;text-align:right;white-space:pre;transform:scaleX(0.9939);transform-origin:right;">39.19</div>
<div style="left:750.48px;top:576.19px;width:31.52px;height:22px;line-height:22px;font-size:11px;color:#000;text-align:right;white-space:pre;transform:scaleX(0.9939);transform-origin:right;">54.56</div>
<div style="left:788.48px;top:576.19px;width:31.52px;height:22px;line-height:22px;font-size:11px;color:#000;text-align:right;white-space:pre;transform:scaleX(0.9939);transform-origin:right;">32.03</div>
<div style="left:825.18px;top:576.19px;width:36.82px;height:22px;line-height:22px;font-size:11px;color:#000;text-align:right;white-space:pre;transform:scaleX(1.0187);transform-origin:right;">112.00</div>
<div style="left:872.48px;top:576.19px;width:31.52px;height:22px;line-height:22px;font-size:11px;color:#000;text-align:right;white-space:pre;transform:scaleX(0.9939);transform-origin:right;">37.00</div>
<div style="left:914.48px;top:576.19px;width:31.52px;height:22px;line-height:22px;font-size:11px;color:#000;text-align:right;white-space:pre;transform:scaleX(0.9939);transform-origin:right;">50.00</div>
<div style="left:956.48px;top:576.19px;width:31.52px;height:22px;line-height:22px;font-size:11px;color:#000;text-align:right;white-space:pre;transform:scaleX(0.9939);transform-origin:right;">32.00</div>
<div style="left:988.36px;top:576.19px;width:37.64px;height:22px;line-height:22px;font-size:11px;color:#000;text-align:right;white-space:pre;transform:scaleX(0.9940);transform-origin:right;">559.12</div>
<div style="left:1033.36px;top:576.19px;width:37.64px;height:22px;line-height:22px;font-size:11px;color:#000;text-align:right;white-space:pre;transform:scaleX(0.9940);transform-origin:right;">141.42</div>
<div style="left:1075.36px;top:576.19px;width:37.64px;height:22px;line-height:22px;font-size:11px;color:#000;text-align:right;white-space:pre;transform:scaleX(0.9940);transform-origin:right;">190.89</div>
<div style="left:1125.36px;top:576.19px;width:37.64px;height:22px;line-height:22px;font-size:11px;color:#000;text-align:right;white-space:pre;transform:scaleX(0.9940);transform-origin:right;">127.94</div>
<div style="left:1185.29px;top:576.19px;width:10.42px;height:22px;line-height:22px;font-size:11px;color:#000;text-align:center;white-space:pre;transform:scaleX(0.9467);transform-origin:center;">=</div>
<svg style="left:1166px;top:579px" width="6" height="6" viewBox="0 0 6 6"><path d="M0 0h6L0 6z" fill="#1e7a3c"/></svg>
<div style="left:1236.29px;top:576.19px;width:10.42px;height:22px;line-height:22px;font-size:11px;color:#000;text-align:center;white-space:pre;transform:scaleX(0.9467);transform-origin:center;">=</div>
<svg style="left:1217px;top:579px" width="6" height="6" viewBox="0 0 6 6"><path d="M0 0h6L0 6z" fill="#1e7a3c"/></svg>
<div style="left:1287.29px;top:576.19px;width:10.42px;height:22px;line-height:22px;font-size:11px;color:#000;text-align:center;white-space:pre;transform:scaleX(0.9467);transform-origin:center;">=</div>
<svg style="left:1268px;top:579px" width="6" height="6" viewBox="0 0 6 6"><path d="M0 0h6L0 6z" fill="#1e7a3c"/></svg>
<div style="left:1338.29px;top:576.19px;width:10.42px;height:22px;line-height:22px;font-size:11px;color:#000;text-align:center;white-space:pre;transform:scaleX(0.9467);transform-origin:center;">=</div>
<svg style="left:1319px;top:579px" width="6" height="6" viewBox="0 0 6 6"><path d="M0 0h6L0 6z" fill="#1e7a3c"/></svg>
<div style="left:57.88px;top:592.19px;width:10.12px;height:22px;line-height:22px;font-size:11px;color:#000;text-align:right;white-space:pre;transform:scaleX(0.9943);transform-origin:right;">4</div>
<div style="left:89.77px;top:592.19px;width:16.23px;height:22px;line-height:22px;font-size:11px;color:#000;text-align:right;white-space:pre;transform:scaleX(0.9943);transform-origin:right;">95</div>
<div style="left:133.77px;top:592.19px;width:16.23px;height:22px;line-height:22px;font-size:11px;color:#000;text-align:right;white-space:pre;transform:scaleX(0.9943);transform-origin:right;">46</div>
<div style="left:167.77px;top:592.19px;width:16.23px;height:22px;line-height:22px;font-size:11px;color:#000;text-align:right;white-space:pre;transform:scaleX(0.9943);transform-origin:right;">56</div>
<div style="left:202.77px;top:592.19px;width:16.23px;height:22px;line-height:22px;font-size:11px;color:#000;text-align:right;white-space:pre;transform:scaleX(0.9943);transform-origin:right;">23</div>
<div style="left:227.48px;top:592.19px;width:31.52px;height:22px;line-height:22px;font-size:11px;color:#0000ff;text-align:right;white-space:pre;transform:scaleX(0.9939);transform-origin:right;">15.09</div>
<div style="left:267.59px;top:592.19px;width:25.41px;height:22px;line-height:22px;font-size:11px;color:#0000ff;text-align:right;white-space:pre;transform:scaleX(0.9939);transform-origin:right;">0.00</div>
<div style="left:306.59px;top:592.19px;width:25.41px;height:22px;line-height:22px;font-size:11px;color:#0000ff;text-align:right;white-space:pre;transform:scaleX(0.9939);transform-origin:right;">0.00</div>
<div style="left:337.59px;top:592.19px;width:25.41px;height:22px;line-height:22px;font-size:11px;color:#0000ff;text-align:right;white-space:pre;transform:scaleX(0.9939);transform-origin:right;">5.45</div>
<div style="left:367.59px;top:592.19px;width:25.41px;height:22px;line-height:22px;font-size:11px;color:#0000ff;text-align:right;white-space:pre;transform:scaleX(0.9939);transform-origin:right;">0.00</div>
<div style="left:408.59px;top:592.19px;width:25.41px;height:22px;line-height:22px;font-size:11px;color:#0000ff;text-align:right;white-space:pre;transform:scaleX(0.9939);transform-origin:right;">5.45</div>
<div style="left:446.59px;top:592.19px;width:25.41px;height:22px;line-height:22px;font-size:11px;color:#0000ff;text-align:right;white-space:pre;transform:scaleX(0.9939);transform-origin:right;">4.09</div>
<div style="left:485.59px;top:592.19px;width:25.41px;height:22px;line-height:22px;font-size:11px;color:#0000ff;text-align:right;white-space:pre;transform:scaleX(0.9939);transform-origin:right;">0.00</div>
<div style="left:518.59px;top:592.19px;width:25.41px;height:22px;line-height:22px;font-size:11px;color:#000;text-align:right;white-space:pre;transform:scaleX(0.9939);transform-origin:right;">1.91</div>
<div style="left:560.59px;top:592.19px;width:25.41px;height:22px;line-height:22px;font-size:11px;color:#000;text-align:right;white-space:pre;transform:scaleX(0.9939);transform-origin:right;">0.82</div>
<div style="left:593.59px;top:592.19px;width:25.41px;height:22px;line-height:22px;font-size:11px;color:#000;text-align:right;white-space:pre;transform:scaleX(0.9939);transform-origin:right;">0.55</div>
<div style="left:636.59px;top:592.19px;width:25.41px;height:22px;line-height:22px;font-size:11px;color:#000;text-align:right;white-space:pre;transform:scaleX(0.9939);transform-origin:right;">3.55</div>
<div style="left:670.48px;top:592.19px;width:31.52px;height:22px;line-height:22px;font-size:11px;color:#000;text-align:right;white-space:pre;transform:scaleX(0.9939);transform-origin:right;">96.91</div>
<div style="left:708.48px;top:592.19px;width:31.52px;height:22px;line-height:22px;font-size:11px;color:#000;text-align:right;white-space:pre;transform:scaleX(0.9939);transform-origin:right;">42.45</div>
<div style="left:750.48px;top:592.19px;width:31.52px;height:22px;line-height:22px;font-size:11px;color:#000;text-align:right;white-space:pre;transform:scaleX(0.9939);transform-origin:right;">54.09</div>
<div style="left:788.48px;top:592.19px;width:31.52px;height:22px;line-height:22px;font-size:11px;color:#000;text-align:right;white-space:pre;transform:scaleX(0.9939);transform-origin:right;">26.55</div>
<div style="left:830.48px;top:592.19px;width:31.52px;height:22px;line-height:22px;font-size:11px;color:#000;text-align:right;white-space:pre;transform:scaleX(0.9939);transform-origin:right;">96.91</div>
<div style="left:872.48px;top:592.19px;width:31.52px;height:22px;line-height:22px;font-size:11px;color:#000;text-align:right;white-space:pre;transform:scaleX(0.9939);transform-origin:right;">37.00</div>
<div style="left:914.48px;top:592.19px;width:31.52px;height:22px;line-height:22px;font-size:11px;color:#000;text-align:right;white-space:pre;transform:scaleX(0.9939);transform-origin:right;">50.00</div>
<div style="left:956.48px;top:592.19px;width:31.52px;height:22px;line-height:22px;font-size:11px;color:#000;text-align:right;white-space:pre;transform:scaleX(0.9939);transform-origin:right;">26.55</div>
<div style="left:988.36px;top:592.19px;width:37.64px;height:22px;line-height:22px;font-size:11px;color:#000;text-align:right;white-space:pre;transform:scaleX(0.9940);transform-origin:right;">454.36</div>
<div style="left:1033.36px;top:592.19px;width:37.64px;height:22px;line-height:22px;font-size:11px;color:#000;text-align:right;white-space:pre;transform:scaleX(0.9940);transform-origin:right;">131.64</div>
<div style="left:1075.36px;top:592.19px;width:37.64px;height:22px;line-height:22px;font-size:11px;color:#000;text-align:right;white-space:pre;transform:scaleX(0.9940);transform-origin:right;">191.82</div>
<div style="left:1131.48px;top:592.19px;width:31.52px;height:22px;line-height:22px;font-size:11px;color:#000;text-align:right;white-space:pre;transform:scaleX(0.9939);transform-origin:right;">78.91</div>
<div style="left:1185.29px;top:592.19px;width:10.42px;height:22px;line-height:22px;font-size:11px;color:#000;text-align:center;white-space:pre;transform:scaleX(0.9467);transform-origin:center;">=</div>
<svg style="left:1166px;top:595px" width="6" height="6" viewBox="0 0 6 6"><path d="M0 0h6L0 6z" fill="#1e7a3c"/></svg>
<div style="left:1236.29px;top:592.19px;width:10.42px;height:22px;line-height:22px;font-size:11px;color:#000;text-align:center;white-space:pre;transform:scaleX(0.9467);transform-origin:center;">=</div>
<svg style="left:1217px;top:595px" width="6" height="6" viewBox="0 0 6 6"><path d="M0 0h6L0 6z" fill="#1e7a3c"/></svg>
<div style="left:1287.29px;top:592.19px;width:10.42px;height:22px;line-height:22px;font-size:11px;color:#000;text-align:center;white-space:pre;transform:scaleX(0.9467);transform-origin:center;">=</div>
<svg style="left:1268px;top:595px" width="6" height="6" viewBox="0 0 6 6"><path d="M0 0h6L0 6z" fill="#1e7a3c"/></svg>
<div style="left:1338.29px;top:592.19px;width:10.42px;height:22px;line-height:22px;font-size:11px;color:#000;text-align:center;white-space:pre;transform:scaleX(0.9467);transform-origin:center;">=</div>
<svg style="left:1319px;top:595px" width="6" height="6" viewBox="0 0 6 6"><path d="M0 0h6L0 6z" fill="#1e7a3c"/></svg>
<div style="left:57.88px;top:608.19px;width:10.12px;height:22px;line-height:22px;font-size:11px;color:#000;text-align:right;white-space:pre;transform:scaleX(0.9943);transform-origin:right;">5</div>
<div style="left:89.77px;top:608.19px;width:16.23px;height:22px;line-height:22px;font-size:11px;color:#000;text-align:right;white-space:pre;transform:scaleX(0.9943);transform-origin:right;">86</div>
<div style="left:133.77px;top:608.19px;width:16.23px;height:22px;line-height:22px;font-size:11px;color:#000;text-align:right;white-space:pre;transform:scaleX(0.9943);transform-origin:right;">33</div>
<div style="left:167.77px;top:608.19px;width:16.23px;height:22px;line-height:22px;font-size:11px;color:#000;text-align:right;white-space:pre;transform:scaleX(0.9943);transform-origin:right;">35</div>
<div style="left:202.77px;top:608.19px;width:16.23px;height:22px;line-height:22px;font-size:11px;color:#000;text-align:right;white-space:pre;transform:scaleX(0.9943);transform-origin:right;">38</div>
<div style="left:227.48px;top:608.19px;width:31.52px;height:22px;line-height:22px;font-size:11px;color:#0000ff;text-align:right;white-space:pre;transform:scaleX(0.9939);transform-origin:right;">25.68</div>
<div style="left:268.41px;top:608.19px;width:24.59px;height:22px;line-height:22px;font-size:11px;color:#0000ff;text-align:right;white-space:pre;transform:scaleX(1.0333);transform-origin:right;">2.11</div>
<div style="left:300.48px;top:608.19px;width:31.52px;height:22px;line-height:22px;font-size:11px;color:#0000ff;text-align:right;white-space:pre;transform:scaleX(0.9939);transform-origin:right;">14.37</div>
<div style="left:337.59px;top:608.19px;width:25.41px;height:22px;line-height:22px;font-size:11px;color:#0000ff;text-align:right;white-space:pre;transform:scaleX(0.9939);transform-origin:right;">0.00</div>
<div style="left:367.59px;top:608.19px;width:25.41px;height:22px;line-height:22px;font-size:11px;color:#0000ff;text-align:right;white-space:pre;transform:scaleX(0.9939);transform-origin:right;">0.00</div>
<div style="left:408.59px;top:608.19px;width:25.41px;height:22px;line-height:22px;font-size:11px;color:#0000ff;text-align:right;white-space:pre;transform:scaleX(0.9939);transform-origin:right;">0.00</div>
<div style="left:446.59px;top:608.19px;width:25.41px;height:22px;line-height:22px;font-size:11px;color:#0000ff;text-align:right;white-space:pre;transform:scaleX(0.9939);transform-origin:right;">0.00</div>
<div style="left:485.59px;top:608.19px;width:25.41px;height:22px;line-height:22px;font-size:11px;color:#0000ff;text-align:right;white-space:pre;transform:scaleX(0.9939);transform-origin:right;">3.16</div>
<div style="left:518.59px;top:608.19px;width:25.41px;height:22px;line-height:22px;font-size:11px;color:#000;text-align:right;white-space:pre;transform:scaleX(0.9939);transform-origin:right;">0.32</div>
<div style="left:560.59px;top:608.19px;width:25.41px;height:22px;line-height:22px;font-size:11px;color:#000;text-align:right;white-space:pre;transform:scaleX(0.9939);transform-origin:right;">1.89</div>
<div style="left:593.59px;top:608.19px;width:25.41px;height:22px;line-height:22px;font-size:11px;color:#000;text-align:right;white-space:pre;transform:scaleX(0.9939);transform-origin:right;">0.63</div>
<div style="left:636.59px;top:608.19px;width:25.41px;height:22px;line-height:22px;font-size:11px;color:#000;text-align:right;white-space:pre;transform:scaleX(0.9939);transform-origin:right;">0.00</div>
<div style="left:670.48px;top:608.19px;width:31.52px;height:22px;line-height:22px;font-size:11px;color:#000;text-align:right;white-space:pre;transform:scaleX(0.9939);transform-origin:right;">86.32</div>
<div style="left:708.48px;top:608.19px;width:31.52px;height:22px;line-height:22px;font-size:11px;color:#000;text-align:right;white-space:pre;transform:scaleX(0.9939);transform-origin:right;">34.89</div>
<div style="left:750.48px;top:608.19px;width:31.52px;height:22px;line-height:22px;font-size:11px;color:#000;text-align:right;white-space:pre;transform:scaleX(0.9939);transform-origin:right;">35.63</div>
<div style="left:788.48px;top:608.19px;width:31.52px;height:22px;line-height:22px;font-size:11px;color:#000;text-align:right;white-space:pre;transform:scaleX(0.9939);transform-origin:right;">35.16</div>
<div style="left:830.48px;top:608.19px;width:31.52px;height:22px;line-height:22px;font-size:11px;color:#000;text-align:right;white-space:pre;transform:scaleX(0.9939);transform-origin:right;">86.32</div>
<div style="left:872.48px;top:608.19px;width:31.52px;height:22px;line-height:22px;font-size:11px;color:#000;text-align:right;white-space:pre;transform:scaleX(0.9939);transform-origin:right;">34.89</div>
<div style="left:914.48px;top:608.19px;width:31.52px;height:22px;line-height:22px;font-size:11px;color:#000;text-align:right;white-space:pre;transform:scaleX(0.9939);transform-origin:right;">35.63</div>
<div style="left:956.48px;top:608.19px;width:31.52px;height:22px;line-height:22px;font-size:11px;color:#000;text-align:right;white-space:pre;transform:scaleX(0.9939);transform-origin:right;">32.00</div>
<div style="left:988.36px;top:608.19px;width:37.64px;height:22px;line-height:22px;font-size:11px;color:#000;text-align:right;white-space:pre;transform:scaleX(0.9940);transform-origin:right;">380.21</div>
<div style="left:1033.36px;top:608.19px;width:37.64px;height:22px;line-height:22px;font-size:11px;color:#000;text-align:right;white-space:pre;transform:scaleX(0.9940);transform-origin:right;">131.16</div>
<div style="left:1081.48px;top:608.19px;width:31.52px;height:22px;line-height:22px;font-size:11px;color:#000;text-align:right;white-space:pre;transform:scaleX(0.9939);transform-origin:right;">70.68</div>
<div style="left:1125.36px;top:608.19px;width:37.64px;height:22px;line-height:22px;font-size:11px;color:#000;text-align:right;white-space:pre;transform:scaleX(0.9940);transform-origin:right;">121.68</div>
<div style="left:1185.29px;top:608.19px;width:10.42px;height:22px;line-height:22px;font-size:11px;color:#000;text-align:center;white-space:pre;transform:scaleX(0.9467);transform-origin:center;">=</div>
<svg style="left:1166px;top:611px" width="6" height="6" viewBox="0 0 6 6"><path d="M0 0h6L0 6z" fill="#1e7a3c"/></svg>
<div style="left:1236.29px;top:608.19px;width:10.42px;height:22px;line-height:22px;font-size:11px;color:#000;text-align:center;white-space:pre;transform:scaleX(0.9467);transform-origin:center;">=</div>
<svg style="left:1217px;top:611px" width="6" height="6" viewBox="0 0 6 6"><path d="M0 0h6L0 6z" fill="#1e7a3c"/></svg>
<div style="left:1287.29px;top:608.19px;width:10.42px;height:22px;line-height:22px;font-size:11px;color:#000;text-align:center;white-space:pre;transform:scaleX(0.9467);transform-origin:center;">=</div>
<svg style="left:1268px;top:611px" width="6" height="6" viewBox="0 0 6 6"><path d="M0 0h6L0 6z" fill="#1e7a3c"/></svg>
<div style="left:1338.29px;top:608.19px;width:10.42px;height:22px;line-height:22px;font-size:11px;color:#000;text-align:center;white-space:pre;transform:scaleX(0.9467);transform-origin:center;">=</div>
<svg style="left:1319px;top:611px" width="6" height="6" viewBox="0 0 6 6"><path d="M0 0h6L0 6z" fill="#1e7a3c"/></svg>
<div style="left:57.88px;top:624.19px;width:10.12px;height:22px;line-height:22px;font-size:11px;color:#000;text-align:right;white-space:pre;transform:scaleX(0.9943);transform-origin:right;">6</div>
<div style="left:84.47px;top:624.19px;width:21.53px;height:22px;line-height:22px;font-size:11px;color:#000;text-align:right;white-space:pre;transform:scaleX(1.0406);transform-origin:right;">112</div>
<div style="left:133.77px;top:624.19px;width:16.23px;height:22px;line-height:22px;font-size:11px;color:#000;text-align:right;white-space:pre;transform:scaleX(0.9943);transform-origin:right;">38</div>
<div style="left:167.77px;top:624.19px;width:16.23px;height:22px;line-height:22px;font-size:11px;color:#000;text-align:right;white-space:pre;transform:scaleX(0.9943);transform-origin:right;">57</div>
<div style="left:202.77px;top:624.19px;width:16.23px;height:22px;line-height:22px;font-size:11px;color:#000;text-align:right;white-space:pre;transform:scaleX(0.9943);transform-origin:right;">32</div>
<div style="left:233.59px;top:624.19px;width:25.41px;height:22px;line-height:22px;font-size:11px;color:#0000ff;text-align:right;white-space:pre;transform:scaleX(0.9939);transform-origin:right;">0.00</div>
<div style="left:267.59px;top:624.19px;width:25.41px;height:22px;line-height:22px;font-size:11px;color:#0000ff;text-align:right;white-space:pre;transform:scaleX(0.9939);transform-origin:right;">0.00</div>
<div style="left:306.59px;top:624.19px;width:25.41px;height:22px;line-height:22px;font-size:11px;color:#0000ff;text-align:right;white-space:pre;transform:scaleX(0.9939);transform-origin:right;">0.00</div>
<div style="left:337.59px;top:624.19px;width:25.41px;height:22px;line-height:22px;font-size:11px;color:#0000ff;text-align:right;white-space:pre;transform:scaleX(0.9939);transform-origin:right;">0.00</div>
<div style="left:367.59px;top:624.19px;width:25.41px;height:22px;line-height:22px;font-size:11px;color:#0000ff;text-align:right;white-space:pre;transform:scaleX(0.9939);transform-origin:right;">0.84</div>
<div style="left:408.59px;top:624.19px;width:25.41px;height:22px;line-height:22px;font-size:11px;color:#0000ff;text-align:right;white-space:pre;transform:scaleX(0.9939);transform-origin:right;">1.45</div>
<div style="left:446.59px;top:624.19px;width:25.41px;height:22px;line-height:22px;font-size:11px;color:#0000ff;text-align:right;white-space:pre;transform:scaleX(0.9939);transform-origin:right;">4.74</div>
<div style="left:485.59px;top:624.19px;width:25.41px;height:22px;line-height:22px;font-size:11px;color:#0000ff;text-align:right;white-space:pre;transform:scaleX(0.9939);transform-origin:right;">0.97</div>
<div style="left:518.59px;top:624.19px;width:25.41px;height:22px;line-height:22px;font-size:11px;color:#000;text-align:right;white-space:pre;transform:scaleX(0.9939);transform-origin:right;">1.34</div>
<div style="left:560.59px;top:624.19px;width:25.41px;height:22px;line-height:22px;font-size:11px;color:#000;text-align:right;white-space:pre;transform:scaleX(0.9939);transform-origin:right;">1.61</div>
<div style="left:593.59px;top:624.19px;width:25.41px;height:22px;line-height:22px;font-size:11px;color:#000;text-align:right;white-space:pre;transform:scaleX(0.9939);transform-origin:right;">0.59</div>
<div style="left:636.59px;top:624.19px;width:25.41px;height:22px;line-height:22px;font-size:11px;color:#000;text-align:right;white-space:pre;transform:scaleX(0.9939);transform-origin:right;">1.84</div>
<div style="left:665.18px;top:624.19px;width:36.82px;height:22px;line-height:22px;font-size:11px;color:#000;text-align:right;white-space:pre;transform:scaleX(1.0187);transform-origin:right;">112.84</div>
<div style="left:708.48px;top:624.19px;width:31.52px;height:22px;line-height:22px;font-size:11px;color:#000;text-align:right;white-space:pre;transform:scaleX(0.9939);transform-origin:right;">38.45</div>
<div style="left:750.48px;top:624.19px;width:31.52px;height:22px;line-height:22px;font-size:11px;color:#000;text-align:right;white-space:pre;transform:scaleX(0.9939);transform-origin:right;">54.74</div>
<div style="left:788.48px;top:624.19px;width:31.52px;height:22px;line-height:22px;font-size:11px;color:#000;text-align:right;white-space:pre;transform:scaleX(0.9939);transform-origin:right;">32.97</div>
<div style="left:825.18px;top:624.19px;width:36.82px;height:22px;line-height:22px;font-size:11px;color:#000;text-align:right;white-space:pre;transform:scaleX(1.0187);transform-origin:right;">112.00</div>
<div style="left:872.48px;top:624.19px;width:31.52px;height:22px;line-height:22px;font-size:11px;color:#000;text-align:right;white-space:pre;transform:scaleX(0.9939);transform-origin:right;">37.00</div>
<div style="left:914.48px;top:624.19px;width:31.52px;height:22px;line-height:22px;font-size:11px;color:#000;text-align:right;white-space:pre;transform:scaleX(0.9939);transform-origin:right;">50.00</div>
<div style="left:956.48px;top:624.19px;width:31.52px;height:22px;line-height:22px;font-size:11px;color:#000;text-align:right;white-space:pre;transform:scaleX(0.9939);transform-origin:right;">32.00</div>
<div style="left:988.36px;top:624.19px;width:37.64px;height:22px;line-height:22px;font-size:11px;color:#000;text-align:right;white-space:pre;transform:scaleX(0.9940);transform-origin:right;">556.66</div>
<div style="left:1033.36px;top:624.19px;width:37.64px;height:22px;line-height:22px;font-size:11px;color:#000;text-align:right;white-space:pre;transform:scaleX(0.9940);transform-origin:right;">143.64</div>
<div style="left:1075.36px;top:624.19px;width:37.64px;height:22px;line-height:22px;font-size:11px;color:#000;text-align:right;white-space:pre;transform:scaleX(0.9940);transform-origin:right;">190.51</div>
<div style="left:1125.36px;top:624.19px;width:37.64px;height:22px;line-height:22px;font-size:11px;color:#000;text-align:right;white-space:pre;transform:scaleX(0.9940);transform-origin:right;">126.06</div>
<div style="left:1185.29px;top:624.19px;width:10.42px;height:22px;line-height:22px;font-size:11px;color:#000;text-align:center;white-space:pre;transform:scaleX(0.9467);transform-origin:center;">=</div>
<svg style="left:1166px;top:627px" width="6" height="6" viewBox="0 0 6 6"><path d="M0 0h6L0 6z" fill="#1e7a3c"/></svg>
<div style="left:1236.29px;top:624.19px;width:10.42px;height:22px;line-height:22px;font-size:11px;color:#000;text-align:center;white-space:pre;transform:scaleX(0.9467);transform-origin:center;">=</div>
<svg style="left:1217px;top:627px" width="6" height="6" viewBox="0 0 6 6"><path d="M0 0h6L0 6z" fill="#1e7a3c"/></svg>
<div style="left:1287.29px;top:624.19px;width:10.42px;height:22px;line-height:22px;font-size:11px;color:#000;text-align:center;white-space:pre;transform:scaleX(0.9467);transform-origin:center;">=</div>
<svg style="left:1268px;top:627px" width="6" height="6" viewBox="0 0 6 6"><path d="M0 0h6L0 6z" fill="#1e7a3c"/></svg>
<div style="left:1338.29px;top:624.19px;width:10.42px;height:22px;line-height:22px;font-size:11px;color:#000;text-align:center;white-space:pre;transform:scaleX(0.9467);transform-origin:center;">=</div>
<svg style="left:1319px;top:627px" width="6" height="6" viewBox="0 0 6 6"><path d="M0 0h6L0 6z" fill="#1e7a3c"/></svg>
<div style="left:57.88px;top:640.19px;width:10.12px;height:22px;line-height:22px;font-size:11px;color:#000;text-align:right;white-space:pre;transform:scaleX(0.9943);transform-origin:right;">7</div>
<div style="left:89.77px;top:640.19px;width:16.23px;height:22px;line-height:22px;font-size:11px;color:#000;text-align:right;white-space:pre;transform:scaleX(0.9943);transform-origin:right;">74</div>
<div style="left:133.77px;top:640.19px;width:16.23px;height:22px;line-height:22px;font-size:11px;color:#000;text-align:right;white-space:pre;transform:scaleX(0.9943);transform-origin:right;">43</div>
<div style="left:167.77px;top:640.19px;width:16.23px;height:22px;line-height:22px;font-size:11px;color:#000;text-align:right;white-space:pre;transform:scaleX(0.9943);transform-origin:right;">37</div>
<div style="left:202.77px;top:640.19px;width:16.23px;height:22px;line-height:22px;font-size:11px;color:#000;text-align:right;white-space:pre;transform:scaleX(0.9943);transform-origin:right;">26</div>
<div style="left:227.48px;top:640.19px;width:31.52px;height:22px;line-height:22px;font-size:11px;color:#0000ff;text-align:right;white-space:pre;transform:scaleX(0.9939);transform-origin:right;">37.33</div>
<div style="left:267.59px;top:640.19px;width:25.41px;height:22px;line-height:22px;font-size:11px;color:#0000ff;text-align:right;white-space:pre;transform:scaleX(0.9939);transform-origin:right;">0.00</div>
<div style="left:300.48px;top:640.19px;width:31.52px;height:22px;line-height:22px;font-size:11px;color:#0000ff;text-align:right;white-space:pre;transform:scaleX(0.9939);transform-origin:right;">12.67</div>
<div style="left:337.59px;top:640.19px;width:25.41px;height:22px;line-height:22px;font-size:11px;color:#0000ff;text-align:right;white-space:pre;transform:scaleX(0.9939);transform-origin:right;">4.33</div>
<div style="left:367.59px;top:640.19px;width:25.41px;height:22px;line-height:22px;font-size:11px;color:#0000ff;text-align:right;white-space:pre;transform:scaleX(0.9939);transform-origin:right;">0.00</div>
<div style="left:408.59px;top:640.19px;width:25.41px;height:22px;line-height:22px;font-size:11px;color:#0000ff;text-align:right;white-space:pre;transform:scaleX(0.9939);transform-origin:right;">3.33</div>
<div style="left:446.59px;top:640.19px;width:25.41px;height:22px;line-height:22px;font-size:11px;color:#0000ff;text-align:right;white-space:pre;transform:scaleX(0.9939);transform-origin:right;">0.00</div>
<div style="left:485.59px;top:640.19px;width:25.41px;height:22px;line-height:22px;font-size:11px;color:#0000ff;text-align:right;white-space:pre;transform:scaleX(0.9939);transform-origin:right;">0.00</div>
<div style="left:518.59px;top:640.19px;width:25.41px;height:22px;line-height:22px;font-size:11px;color:#000;text-align:right;white-space:pre;transform:scaleX(0.9939);transform-origin:right;">0.67</div>
<div style="left:560.59px;top:640.19px;width:25.41px;height:22px;line-height:22px;font-size:11px;color:#000;text-align:right;white-space:pre;transform:scaleX(0.9939);transform-origin:right;">0.00</div>
<div style="left:593.59px;top:640.19px;width:25.41px;height:22px;line-height:22px;font-size:11px;color:#000;text-align:right;white-space:pre;transform:scaleX(0.9939);transform-origin:right;">0.33</div>
<div style="left:636.59px;top:640.19px;width:25.41px;height:22px;line-height:22px;font-size:11px;color:#000;text-align:right;white-space:pre;transform:scaleX(0.9939);transform-origin:right;">1.67</div>
<div style="left:670.48px;top:640.19px;width:31.52px;height:22px;line-height:22px;font-size:11px;color:#000;text-align:right;white-space:pre;transform:scaleX(0.9939);transform-origin:right;">74.67</div>
<div style="left:708.48px;top:640.19px;width:31.52px;height:22px;line-height:22px;font-size:11px;color:#000;text-align:right;white-space:pre;transform:scaleX(0.9939);transform-origin:right;">40.33</div>
<div style="left:750.48px;top:640.19px;width:31.52px;height:22px;line-height:22px;font-size:11px;color:#000;text-align:right;white-space:pre;transform:scaleX(0.9939);transform-origin:right;">37.33</div>
<div style="left:788.48px;top:640.19px;width:31.52px;height:22px;line-height:22px;font-size:11px;color:#000;text-align:right;white-space:pre;transform:scaleX(0.9939);transform-origin:right;">27.67</div>
<div style="left:830.48px;top:640.19px;width:31.52px;height:22px;line-height:22px;font-size:11px;color:#000;text-align:right;white-space:pre;transform:scaleX(0.9939);transform-origin:right;">74.67</div>
<div style="left:872.48px;top:640.19px;width:31.52px;height:22px;line-height:22px;font-size:11px;color:#000;text-align:right;white-space:pre;transform:scaleX(0.9939);transform-origin:right;">37.00</div>
<div style="left:914.48px;top:640.19px;width:31.52px;height:22px;line-height:22px;font-size:11px;color:#000;text-align:right;white-space:pre;transform:scaleX(0.9939);transform-origin:right;">37.33</div>
<div style="left:956.48px;top:640.19px;width:31.52px;height:22px;line-height:22px;font-size:11px;color:#000;text-align:right;white-space:pre;transform:scaleX(0.9939);transform-origin:right;">27.67</div>
<div style="left:988.36px;top:640.19px;width:37.64px;height:22px;line-height:22px;font-size:11px;color:#000;text-align:right;white-space:pre;transform:scaleX(0.9940);transform-origin:right;">298.67</div>
<div style="left:1033.36px;top:640.19px;width:37.64px;height:22px;line-height:22px;font-size:11px;color:#000;text-align:right;white-space:pre;transform:scaleX(0.9940);transform-origin:right;">138.00</div>
<div style="left:1081.48px;top:640.19px;width:31.52px;height:22px;line-height:22px;font-size:11px;color:#000;text-align:right;white-space:pre;transform:scaleX(0.9939);transform-origin:right;">86.00</div>
<div style="left:1131.48px;top:640.19px;width:31.52px;height:22px;line-height:22px;font-size:11px;color:#000;text-align:right;white-space:pre;transform:scaleX(0.9939);transform-origin:right;">89.00</div>
<div style="left:1185.29px;top:640.19px;width:10.42px;height:22px;line-height:22px;font-size:11px;color:#000;text-align:center;white-space:pre;transform:scaleX(0.9467);transform-origin:center;">=</div>
<svg style="left:1166px;top:643px" width="6" height="6" viewBox="0 0 6 6"><path d="M0 0h6L0 6z" fill="#1e7a3c"/></svg>
<div style="left:1236.29px;top:640.19px;width:10.42px;height:22px;line-height:22px;font-size:11px;color:#000;text-align:center;white-space:pre;transform:scaleX(0.9467);transform-origin:center;">=</div>
<svg style="left:1217px;top:643px" width="6" height="6" viewBox="0 0 6 6"><path d="M0 0h6L0 6z" fill="#1e7a3c"/></svg>
<div style="left:1287.29px;top:640.19px;width:10.42px;height:22px;line-height:22px;font-size:11px;color:#000;text-align:center;white-space:pre;transform:scaleX(0.9467);transform-origin:center;">=</div>
<svg style="left:1268px;top:643px" width="6" height="6" viewBox="0 0 6 6"><path d="M0 0h6L0 6z" fill="#1e7a3c"/></svg>
<div style="left:1338.29px;top:640.19px;width:10.42px;height:22px;line-height:22px;font-size:11px;color:#000;text-align:center;white-space:pre;transform:scaleX(0.9467);transform-origin:center;">=</div>
<svg style="left:1319px;top:643px" width="6" height="6" viewBox="0 0 6 6"><path d="M0 0h6L0 6z" fill="#1e7a3c"/></svg>
<div style="left:57.88px;top:656.19px;width:10.12px;height:22px;line-height:22px;font-size:11px;color:#000;text-align:right;white-space:pre;transform:scaleX(0.9943);transform-origin:right;">8</div>
<div style="left:83.65px;top:656.19px;width:22.35px;height:22px;line-height:22px;font-size:11px;color:#000;text-align:right;white-space:pre;transform:scaleX(0.9943);transform-origin:right;">101</div>
<div style="left:133.77px;top:656.19px;width:16.23px;height:22px;line-height:22px;font-size:11px;color:#000;text-align:right;white-space:pre;transform:scaleX(0.9943);transform-origin:right;">20</div>
<div style="left:167.77px;top:656.19px;width:16.23px;height:22px;line-height:22px;font-size:11px;color:#000;text-align:right;white-space:pre;transform:scaleX(0.9943);transform-origin:right;">45</div>
<div style="left:202.77px;top:656.19px;width:16.23px;height:22px;line-height:22px;font-size:11px;color:#000;text-align:right;white-space:pre;transform:scaleX(0.9943);transform-origin:right;">49</div>
<div style="left:228.29px;top:656.19px;width:30.71px;height:22px;line-height:22px;font-size:11px;color:#0000ff;text-align:right;white-space:pre;transform:scaleX(1.0243);transform-origin:right;">10.11</div>
<div style="left:262.29px;top:656.19px;width:30.71px;height:22px;line-height:22px;font-size:11px;color:#0000ff;text-align:right;white-space:pre;transform:scaleX(1.0243);transform-origin:right;">11.63</div>
<div style="left:306.59px;top:656.19px;width:25.41px;height:22px;line-height:22px;font-size:11px;color:#0000ff;text-align:right;white-space:pre;transform:scaleX(0.9939);transform-origin:right;">3.21</div>
<div style="left:337.59px;top:656.19px;width:25.41px;height:22px;line-height:22px;font-size:11px;color:#0000ff;text-align:right;white-space:pre;transform:scaleX(0.9939);transform-origin:right;">0.00</div>
<div style="left:367.59px;top:656.19px;width:25.41px;height:22px;line-height:22px;font-size:11px;color:#0000ff;text-align:right;white-space:pre;transform:scaleX(0.9939);transform-origin:right;">0.00</div>
<div style="left:408.59px;top:656.19px;width:25.41px;height:22px;line-height:22px;font-size:11px;color:#0000ff;text-align:right;white-space:pre;transform:scaleX(0.9939);transform-origin:right;">0.00</div>
<div style="left:446.59px;top:656.19px;width:25.41px;height:22px;line-height:22px;font-size:11px;color:#0000ff;text-align:right;white-space:pre;transform:scaleX(0.9939);transform-origin:right;">0.00</div>
<div style="left:485.59px;top:656.19px;width:25.41px;height:22px;line-height:22px;font-size:11px;color:#0000ff;text-align:right;white-space:pre;transform:scaleX(0.9939);transform-origin:right;">8.95</div>
<div style="left:518.59px;top:656.19px;width:25.41px;height:22px;line-height:22px;font-size:11px;color:#000;text-align:right;white-space:pre;transform:scaleX(0.9939);transform-origin:right;">0.89</div>
<div style="left:560.59px;top:656.19px;width:25.41px;height:22px;line-height:22px;font-size:11px;color:#000;text-align:right;white-space:pre;transform:scaleX(0.9939);transform-origin:right;">5.37</div>
<div style="left:593.59px;top:656.19px;width:25.41px;height:22px;line-height:22px;font-size:11px;color:#000;text-align:right;white-space:pre;transform:scaleX(0.9939);transform-origin:right;">1.79</div>
<div style="left:636.59px;top:656.19px;width:25.41px;height:22px;line-height:22px;font-size:11px;color:#000;text-align:right;white-space:pre;transform:scaleX(0.9939);transform-origin:right;">0.00</div>
<div style="left:664.36px;top:656.19px;width:37.64px;height:22px;line-height:22px;font-size:11px;color:#000;text-align:right;white-space:pre;transform:scaleX(0.9940);transform-origin:right;">101.89</div>
<div style="left:708.48px;top:656.19px;width:31.52px;height:22px;line-height:22px;font-size:11px;color:#000;text-align:right;white-space:pre;transform:scaleX(0.9939);transform-origin:right;">25.37</div>
<div style="left:750.48px;top:656.19px;width:31.52px;height:22px;line-height:22px;font-size:11px;color:#000;text-align:right;white-space:pre;transform:scaleX(0.9939);transform-origin:right;">46.79</div>
<div style="left:788.48px;top:656.19px;width:31.52px;height:22px;line-height:22px;font-size:11px;color:#000;text-align:right;white-space:pre;transform:scaleX(0.9939);transform-origin:right;">40.95</div>
<div style="left:824.36px;top:656.19px;width:37.64px;height:22px;line-height:22px;font-size:11px;color:#000;text-align:right;white-space:pre;transform:scaleX(0.9940);transform-origin:right;">101.89</div>
<div style="left:872.48px;top:656.19px;width:31.52px;height:22px;line-height:22px;font-size:11px;color:#000;text-align:right;white-space:pre;transform:scaleX(0.9939);transform-origin:right;">25.37</div>
<div style="left:914.48px;top:656.19px;width:31.52px;height:22px;line-height:22px;font-size:11px;color:#000;text-align:right;white-space:pre;transform:scaleX(0.9939);transform-origin:right;">46.79</div>
<div style="left:956.48px;top:656.19px;width:31.52px;height:22px;line-height:22px;font-size:11px;color:#000;text-align:right;white-space:pre;transform:scaleX(0.9939);transform-origin:right;">32.00</div>
<div style="left:988.36px;top:656.19px;width:37.64px;height:22px;line-height:22px;font-size:11px;color:#000;text-align:right;white-space:pre;transform:scaleX(0.9940);transform-origin:right;">489.26</div>
<div style="left:1039.48px;top:656.19px;width:31.52px;height:22px;line-height:22px;font-size:11px;color:#000;text-align:right;white-space:pre;transform:scaleX(0.9939);transform-origin:right;">54.95</div>
<div style="left:1076.18px;top:656.19px;width:36.82px;height:22px;line-height:22px;font-size:11px;color:#000;text-align:right;white-space:pre;transform:scaleX(1.0187);transform-origin:right;">171.11</div>
<div style="left:1126.99px;top:656.19px;width:36.01px;height:22px;line-height:22px;font-size:11px;color:#000;text-align:right;white-space:pre;transform:scaleX(1.0447);transform-origin:right;">110.11</div>
<div style="left:1185.29px;top:656.19px;width:10.42px;height:22px;line-height:22px;font-size:11px;color:#000;text-align:center;white-space:pre;transform:scaleX(0.9467);transform-origin:center;">=</div>
<svg style="left:1166px;top:659px" width="6" height="6" viewBox="0 0 6 6"><path d="M0 0h6L0 6z" fill="#1e7a3c"/></svg>
<div style="left:1236.29px;top:656.19px;width:10.42px;height:22px;line-height:22px;font-size:11px;color:#000;text-align:center;white-space:pre;transform:scaleX(0.9467);transform-origin:center;">=</div>
<svg style="left:1217px;top:659px" width="6" height="6" viewBox="0 0 6 6"><path d="M0 0h6L0 6z" fill="#1e7a3c"/></svg>
<div style="left:1287.29px;top:656.19px;width:10.42px;height:22px;line-height:22px;font-size:11px;color:#000;text-align:center;white-space:pre;transform:scaleX(0.9467);transform-origin:center;">=</div>
<svg style="left:1268px;top:659px" width="6" height="6" viewBox="0 0 6 6"><path d="M0 0h6L0 6z" fill="#1e7a3c"/></svg>
<div style="left:1338.29px;top:656.19px;width:10.42px;height:22px;line-height:22px;font-size:11px;color:#000;text-align:center;white-space:pre;transform:scaleX(0.9467);transform-origin:center;">=</div>
<svg style="left:1319px;top:659px" width="6" height="6" viewBox="0 0 6 6"><path d="M0 0h6L0 6z" fill="#1e7a3c"/></svg>
<div style="left:57.88px;top:672.19px;width:10.12px;height:22px;line-height:22px;font-size:11px;color:#000;text-align:right;white-space:pre;transform:scaleX(0.9943);transform-origin:right;">9</div>
<div style="left:89.77px;top:672.19px;width:16.23px;height:22px;line-height:22px;font-size:11px;color:#000;text-align:right;white-space:pre;transform:scaleX(0.9943);transform-origin:right;">95</div>
<div style="left:133.77px;top:672.19px;width:16.23px;height:22px;line-height:22px;font-size:11px;color:#000;text-align:right;white-space:pre;transform:scaleX(0.9943);transform-origin:right;">51</div>
<div style="left:167.77px;top:672.19px;width:16.23px;height:22px;line-height:22px;font-size:11px;color:#000;text-align:right;white-space:pre;transform:scaleX(0.9943);transform-origin:right;">53</div>
<div style="left:202.77px;top:672.19px;width:16.23px;height:22px;line-height:22px;font-size:11px;color:#000;text-align:right;white-space:pre;transform:scaleX(0.9943);transform-origin:right;">20</div>
<div style="left:227.48px;top:672.19px;width:31.52px;height:22px;line-height:22px;font-size:11px;color:#0000ff;text-align:right;white-space:pre;transform:scaleX(0.9939);transform-origin:right;">14.92</div>
<div style="left:267.59px;top:672.19px;width:25.41px;height:22px;line-height:22px;font-size:11px;color:#0000ff;text-align:right;white-space:pre;transform:scaleX(0.9939);transform-origin:right;">0.00</div>
<div style="left:306.59px;top:672.19px;width:25.41px;height:22px;line-height:22px;font-size:11px;color:#0000ff;text-align:right;white-space:pre;transform:scaleX(0.9939);transform-origin:right;">0.00</div>
<div style="left:337.59px;top:672.19px;width:25.41px;height:22px;line-height:22px;font-size:11px;color:#0000ff;text-align:right;white-space:pre;transform:scaleX(0.9939);transform-origin:right;">7.50</div>
<div style="left:367.59px;top:672.19px;width:25.41px;height:22px;line-height:22px;font-size:11px;color:#0000ff;text-align:right;white-space:pre;transform:scaleX(0.9939);transform-origin:right;">0.00</div>
<div style="left:408.59px;top:672.19px;width:25.41px;height:22px;line-height:22px;font-size:11px;color:#0000ff;text-align:right;white-space:pre;transform:scaleX(0.9939);transform-origin:right;">8.04</div>
<div style="left:446.59px;top:672.19px;width:25.41px;height:22px;line-height:22px;font-size:11px;color:#0000ff;text-align:right;white-space:pre;transform:scaleX(0.9939);transform-origin:right;">2.38</div>
<div style="left:485.59px;top:672.19px;width:25.41px;height:22px;line-height:22px;font-size:11px;color:#0000ff;text-align:right;white-space:pre;transform:scaleX(0.9939);transform-origin:right;">0.00</div>
<div style="left:518.59px;top:672.19px;width:25.41px;height:22px;line-height:22px;font-size:11px;color:#000;text-align:right;white-space:pre;transform:scaleX(0.9939);transform-origin:right;">2.08</div>
<div style="left:560.59px;top:672.19px;width:25.41px;height:22px;line-height:22px;font-size:11px;color:#000;text-align:right;white-space:pre;transform:scaleX(0.9939);transform-origin:right;">0.48</div>
<div style="left:593.59px;top:672.19px;width:25.41px;height:22px;line-height:22px;font-size:11px;color:#000;text-align:right;white-space:pre;transform:scaleX(0.9939);transform-origin:right;">0.80</div>
<div style="left:636.59px;top:672.19px;width:25.41px;height:22px;line-height:22px;font-size:11px;color:#000;text-align:right;white-space:pre;transform:scaleX(0.9939);transform-origin:right;">4.50</div>
<div style="left:670.48px;top:672.19px;width:31.52px;height:22px;line-height:22px;font-size:11px;color:#000;text-align:right;white-space:pre;transform:scaleX(0.9939);transform-origin:right;">97.08</div>
<div style="left:708.48px;top:672.19px;width:31.52px;height:22px;line-height:22px;font-size:11px;color:#000;text-align:right;white-space:pre;transform:scaleX(0.9939);transform-origin:right;">45.04</div>
<div style="left:750.48px;top:672.19px;width:31.52px;height:22px;line-height:22px;font-size:11px;color:#000;text-align:right;white-space:pre;transform:scaleX(0.9939);transform-origin:right;">52.38</div>
<div style="left:788.48px;top:672.19px;width:31.52px;height:22px;line-height:22px;font-size:11px;color:#000;text-align:right;white-space:pre;transform:scaleX(0.9939);transform-origin:right;">24.50</div>
<div style="left:830.48px;top:672.19px;width:31.52px;height:22px;line-height:22px;font-size:11px;color:#000;text-align:right;white-space:pre;transform:scaleX(0.9939);transform-origin:right;">97.08</div>
<div style="left:872.48px;top:672.19px;width:31.52px;height:22px;line-height:22px;font-size:11px;color:#000;text-align:right;white-space:pre;transform:scaleX(0.9939);transform-origin:right;">37.00</div>
<div style="left:914.48px;top:672.19px;width:31.52px;height:22px;line-height:22px;font-size:11px;color:#000;text-align:right;white-space:pre;transform:scaleX(0.9939);transform-origin:right;">50.00</div>
<div style="left:956.48px;top:672.19px;width:31.52px;height:22px;line-height:22px;font-size:11px;color:#000;text-align:right;white-space:pre;transform:scaleX(0.9939);transform-origin:right;">24.50</div>
<div style="left:988.36px;top:672.19px;width:37.64px;height:22px;line-height:22px;font-size:11px;color:#000;text-align:right;white-space:pre;transform:scaleX(0.9940);transform-origin:right;">455.59</div>
<div style="left:1033.36px;top:672.19px;width:37.64px;height:22px;line-height:22px;font-size:11px;color:#000;text-align:right;white-space:pre;transform:scaleX(0.9940);transform-origin:right;">123.87</div>
<div style="left:1075.36px;top:672.19px;width:37.64px;height:22px;line-height:22px;font-size:11px;color:#000;text-align:right;white-space:pre;transform:scaleX(0.9940);transform-origin:right;">195.24</div>
<div style="left:1131.48px;top:672.19px;width:31.52px;height:22px;line-height:22px;font-size:11px;color:#000;text-align:right;white-space:pre;transform:scaleX(0.9939);transform-origin:right;">60.47</div>
<div style="left:1185.29px;top:672.19px;width:10.42px;height:22px;line-height:22px;font-size:11px;color:#000;text-align:center;white-space:pre;transform:scaleX(0.9467);transform-origin:center;">=</div>
<svg style="left:1166px;top:675px" width="6" height="6" viewBox="0 0 6 6"><path d="M0 0h6L0 6z" fill="#1e7a3c"/></svg>
<div style="left:1236.29px;top:672.19px;width:10.42px;height:22px;line-height:22px;font-size:11px;color:#000;text-align:center;white-space:pre;transform:scaleX(0.9467);transform-origin:center;">=</div>
<svg style="left:1217px;top:675px" width="6" height="6" viewBox="0 0 6 6"><path d="M0 0h6L0 6z" fill="#1e7a3c"/></svg>
<div style="left:1287.29px;top:672.19px;width:10.42px;height:22px;line-height:22px;font-size:11px;color:#000;text-align:center;white-space:pre;transform:scaleX(0.9467);transform-origin:center;">=</div>
<svg style="left:1268px;top:675px" width="6" height="6" viewBox="0 0 6 6"><path d="M0 0h6L0 6z" fill="#1e7a3c"/></svg>
<div style="left:1338.29px;top:672.19px;width:10.42px;height:22px;line-height:22px;font-size:11px;color:#000;text-align:center;white-space:pre;transform:scaleX(0.9467);transform-origin:center;">=</div>
<svg style="left:1319px;top:675px" width="6" height="6" viewBox="0 0 6 6"><path d="M0 0h6L0 6z" fill="#1e7a3c"/></svg>
<div style="left:51.77px;top:688.19px;width:16.23px;height:22px;line-height:22px;font-size:11px;color:#000;text-align:right;white-space:pre;transform:scaleX(0.9943);transform-origin:right;">10</div>
<div style="left:89.77px;top:688.19px;width:16.23px;height:22px;line-height:22px;font-size:11px;color:#000;text-align:right;white-space:pre;transform:scaleX(0.9943);transform-origin:right;">82</div>
<div style="left:133.77px;top:688.19px;width:16.23px;height:22px;line-height:22px;font-size:11px;color:#000;text-align:right;white-space:pre;transform:scaleX(0.9943);transform-origin:right;">33</div>
<div style="left:167.77px;top:688.19px;width:16.23px;height:22px;line-height:22px;font-size:11px;color:#000;text-align:right;white-space:pre;transform:scaleX(0.9943);transform-origin:right;">49</div>
<div style="left:202.77px;top:688.19px;width:16.23px;height:22px;line-height:22px;font-size:11px;color:#000;text-align:right;white-space:pre;transform:scaleX(0.9943);transform-origin:right;">35</div>
<div style="left:227.48px;top:688.19px;width:31.52px;height:22px;line-height:22px;font-size:11px;color:#0000ff;text-align:right;white-space:pre;transform:scaleX(0.9939);transform-origin:right;">29.84</div>
<div style="left:267.59px;top:688.19px;width:25.41px;height:22px;line-height:22px;font-size:11px;color:#0000ff;text-align:right;white-space:pre;transform:scaleX(0.9939);transform-origin:right;">3.05</div>
<div style="left:306.59px;top:688.19px;width:25.41px;height:22px;line-height:22px;font-size:11px;color:#0000ff;text-align:right;white-space:pre;transform:scaleX(0.9939);transform-origin:right;">0.68</div>
<div style="left:337.59px;top:688.19px;width:25.41px;height:22px;line-height:22px;font-size:11px;color:#0000ff;text-align:right;white-space:pre;transform:scaleX(0.9939);transform-origin:right;">0.00</div>
<div style="left:367.59px;top:688.19px;width:25.41px;height:22px;line-height:22px;font-size:11px;color:#0000ff;text-align:right;white-space:pre;transform:scaleX(0.9939);transform-origin:right;">0.00</div>
<div style="left:408.59px;top:688.19px;width:25.41px;height:22px;line-height:22px;font-size:11px;color:#0000ff;text-align:right;white-space:pre;transform:scaleX(0.9939);transform-origin:right;">0.00</div>
<div style="left:446.59px;top:688.19px;width:25.41px;height:22px;line-height:22px;font-size:11px;color:#0000ff;text-align:right;white-space:pre;transform:scaleX(0.9939);transform-origin:right;">0.00</div>
<div style="left:485.59px;top:688.19px;width:25.41px;height:22px;line-height:22px;font-size:11px;color:#0000ff;text-align:right;white-space:pre;transform:scaleX(0.9939);transform-origin:right;">1.58</div>
<div style="left:518.59px;top:688.19px;width:25.41px;height:22px;line-height:22px;font-size:11px;color:#000;text-align:right;white-space:pre;transform:scaleX(0.9939);transform-origin:right;">0.16</div>
<div style="left:560.59px;top:688.19px;width:25.41px;height:22px;line-height:22px;font-size:11px;color:#000;text-align:right;white-space:pre;transform:scaleX(0.9939);transform-origin:right;">0.95</div>
<div style="left:593.59px;top:688.19px;width:25.41px;height:22px;line-height:22px;font-size:11px;color:#000;text-align:right;white-space:pre;transform:scaleX(0.9939);transform-origin:right;">0.32</div>
<div style="left:636.59px;top:688.19px;width:25.41px;height:22px;line-height:22px;font-size:11px;color:#000;text-align:right;white-space:pre;transform:scaleX(0.9939);transform-origin:right;">0.00</div>
<div style="left:670.48px;top:688.19px;width:31.52px;height:22px;line-height:22px;font-size:11px;color:#000;text-align:right;white-space:pre;transform:scaleX(0.9939);transform-origin:right;">82.16</div>
<div style="left:708.48px;top:688.19px;width:31.52px;height:22px;line-height:22px;font-size:11px;color:#000;text-align:right;white-space:pre;transform:scaleX(0.9939);transform-origin:right;">33.95</div>
<div style="left:750.48px;top:688.19px;width:31.52px;height:22px;line-height:22px;font-size:11px;color:#000;text-align:right;white-space:pre;transform:scaleX(0.9939);transform-origin:right;">49.32</div>
<div style="left:788.48px;top:688.19px;width:31.52px;height:22px;line-height:22px;font-size:11px;color:#000;text-align:right;white-space:pre;transform:scaleX(0.9939);transform-origin:right;">33.58</div>
<div style="left:830.48px;top:688.19px;width:31.52px;height:22px;line-height:22px;font-size:11px;color:#000;text-align:right;white-space:pre;transform:scaleX(0.9939);transform-origin:right;">82.16</div>
<div style="left:872.48px;top:688.19px;width:31.52px;height:22px;line-height:22px;font-size:11px;color:#000;text-align:right;white-space:pre;transform:scaleX(0.9939);transform-origin:right;">33.95</div>
<div style="left:914.48px;top:688.19px;width:31.52px;height:22px;line-height:22px;font-size:11px;color:#000;text-align:right;white-space:pre;transform:scaleX(0.9939);transform-origin:right;">49.32</div>
<div style="left:956.48px;top:688.19px;width:31.52px;height:22px;line-height:22px;font-size:11px;color:#000;text-align:right;white-space:pre;transform:scaleX(0.9939);transform-origin:right;">32.00</div>
<div style="left:989.18px;top:688.19px;width:36.82px;height:22px;line-height:22px;font-size:11px;color:#000;text-align:right;white-space:pre;transform:scaleX(1.0187);transform-origin:right;">351.11</div>
<div style="left:1033.36px;top:688.19px;width:37.64px;height:22px;line-height:22px;font-size:11px;color:#000;text-align:right;white-space:pre;transform:scaleX(0.9940);transform-origin:right;">123.58</div>
<div style="left:1075.36px;top:688.19px;width:37.64px;height:22px;line-height:22px;font-size:11px;color:#000;text-align:right;white-space:pre;transform:scaleX(0.9940);transform-origin:right;">193.84</div>
<div style="left:1125.36px;top:688.19px;width:37.64px;height:22px;line-height:22px;font-size:11px;color:#000;text-align:right;white-space:pre;transform:scaleX(0.9940);transform-origin:right;">124.84</div>
<div style="left:1185.29px;top:688.19px;width:10.42px;height:22px;line-height:22px;font-size:11px;color:#000;text-align:center;white-space:pre;transform:scaleX(0.9467);transform-origin:center;">=</div>
<svg style="left:1166px;top:691px" width="6" height="6" viewBox="0 0 6 6"><path d="M0 0h6L0 6z" fill="#1e7a3c"/></svg>
<div style="left:1236.29px;top:688.19px;width:10.42px;height:22px;line-height:22px;font-size:11px;color:#000;text-align:center;white-space:pre;transform:scaleX(0.9467);transform-origin:center;">=</div>
<svg style="left:1217px;top:691px" width="6" height="6" viewBox="0 0 6 6"><path d="M0 0h6L0 6z" fill="#1e7a3c"/></svg>
<div style="left:1287.29px;top:688.19px;width:10.42px;height:22px;line-height:22px;font-size:11px;color:#000;text-align:center;white-space:pre;transform:scaleX(0.9467);transform-origin:center;">=</div>
<svg style="left:1268px;top:691px" width="6" height="6" viewBox="0 0 6 6"><path d="M0 0h6L0 6z" fill="#1e7a3c"/></svg>
<div style="left:1338.29px;top:688.19px;width:10.42px;height:22px;line-height:22px;font-size:11px;color:#000;text-align:center;white-space:pre;transform:scaleX(0.9467);transform-origin:center;">=</div>
<svg style="left:1319px;top:691px" width="6" height="6" viewBox="0 0 6 6"><path d="M0 0h6L0 6z" fill="#1e7a3c"/></svg>
<div style="left:0px;top:990px;width:1422px;height:28px;background:#6a6a6a;"></div>
<div style="left:0px;top:1017px;width:1422px;height:1px;background:#3a3a3a;"></div>
<div style="left:0px;top:1018px;width:1422px;height:2px;background:#c8c8c8;"></div>
<svg style="left:27px;top:999px" width="6" height="9" viewBox="0 0 6 9"><path d="M5 0.5v8L0.5 4.5z" fill="#a6a6a6"/></svg>
<svg style="left:55px;top:999px" width="6" height="9" viewBox="0 0 6 9"><path d="M1 0.5v8L5.5 4.5z" fill="#a6a6a6"/></svg>
<div style="left:100px;top:994px;width:1px;height:20px;background:#a8a8a8;"></div>
<div style="left:113.00px;top:991.84px;width:64.02px;height:24px;line-height:24px;font-size:12px;color:#eee;text-align:left;white-space:pre;transform:scaleX(1.0497);transform-origin:left;">WB! Status</div>
<div style="left:191px;top:990px;width:97px;height:25px;background:#fff;"></div>
<div style="left:191px;top:1013px;width:97px;height:2px;background:#1e7a3c;"></div>
<div style="left:203.60px;top:991.84px;width:71.33px;height:24px;line-height:24px;font-size:12px;font-weight:bold;color:#1e7145;text-align:left;white-space:pre;transform:scaleX(1.0693);transform-origin:left;">NuVendSub</div>
<svg style="left:320px;top:995px" width="18" height="18" viewBox="0 0 18 18"><circle cx="9" cy="9" r="7.8" fill="none" stroke="#fff" stroke-width="1.4"/><path d="M9 5v8M5 9h8" stroke="#fff" stroke-width="1.8"/></svg>
<div style="left:1152px;top:998px;width:2px;height:2px;background:#eee;"></div>
<div style="left:1152px;top:1003px;width:2px;height:2px;background:#eee;"></div>
<div style="left:1152px;top:1008px;width:2px;height:2px;background:#eee;"></div>
<div style="left:1169px;top:998px;width:253px;height:13px;background:#d0d0d0;"></div>
<div style="left:1184px;top:998px;width:2px;height:13px;background:#6a6a6a;"></div>
<svg style="left:1172px;top:1000px" width="10" height="9" viewBox="0 0 10 9"><path d="M7 0v9L1 4.5z" fill="#222"/></svg>
</body></html>
